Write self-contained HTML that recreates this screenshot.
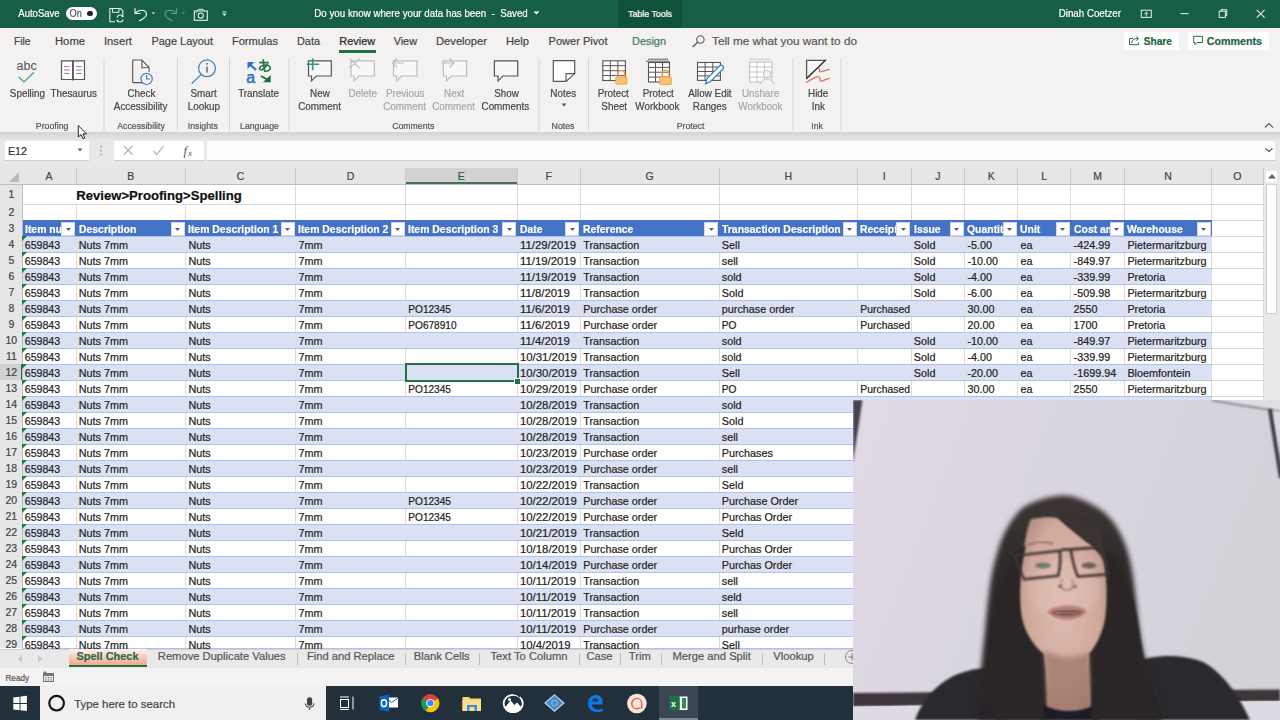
<!DOCTYPE html>
<html><head><meta charset="utf-8"><style>
html,body{margin:0;padding:0;width:1280px;height:720px;overflow:hidden;background:#fff}
body{position:relative;font-family:"Liberation Sans",sans-serif}
div,svg{position:absolute}
.t{white-space:nowrap;-webkit-text-stroke:0.2px currentColor}
</style></head><body>
<div style="left:0px;top:0px;width:1280px;height:28px;background:#175e46"></div>
<div style="left:618px;top:0px;width:64px;height:28px;background:#10513a"></div>
<div class="t" style="left:14.42px;width:49.96px;text-align:center;top:6.90px;font-size:10.60px;line-height:12.00px;color:#fff;font-weight:400;transform:scaleX(0.9)">AutoSave</div>
<div style="left:65.5px;top:6.75px;width:31px;height:13px;border-radius:7px;background:#fff"></div>
<div class="t" style="left:66.83px;width:17.34px;text-align:center;top:8.00px;font-size:10.00px;line-height:11.00px;color:#555;font-weight:400;transform:scaleX(0.92)">On</div>
<div style="left:87.2px;top:10.6px;width:5.8px;height:5.8px;border-radius:50%;background:#222"></div>
<div class="t" style="left:303.43px;width:236.14px;text-align:center;top:6.90px;font-size:10.60px;line-height:12.00px;color:#fff;font-weight:400;transform:scaleX(0.92)">Do you know where your data has been&nbsp; - &nbsp;Saved</div>
<div class="t" style="left:628.00px;top:8.50px;font-size:8.83px;line-height:10.00px;color:#fff;font-weight:400;">Table Tools</div>
<div class="t" style="left:1053.92px;width:71.75px;text-align:center;top:6.90px;font-size:10.60px;line-height:12.00px;color:#fff;font-weight:400;transform:scaleX(0.92)">Dinah Coetzer</div>
<div style="left:0px;top:28px;width:1280px;height:104px;background:#f3f2f0"></div>
<div class="t" style="left:14.00px;top:36.40px;font-size:10.24px;line-height:11.00px;color:#444;font-weight:400;">File</div>
<div class="t" style="left:55.00px;top:35.40px;font-size:11.25px;line-height:12.00px;color:#444;font-weight:400;">Home</div>
<div class="t" style="left:104.00px;top:35.40px;font-size:11.20px;line-height:12.00px;color:#444;font-weight:400;">Insert</div>
<div class="t" style="left:151.40px;top:35.40px;font-size:10.97px;line-height:12.00px;color:#444;font-weight:400;">Page Layout</div>
<div class="t" style="left:232.00px;top:35.40px;font-size:11.04px;line-height:12.00px;color:#444;font-weight:400;">Formulas</div>
<div class="t" style="left:297.00px;top:35.40px;font-size:10.89px;line-height:12.00px;color:#444;font-weight:400;">Data</div>
<div class="t" style="left:339.30px;top:35.40px;font-size:10.95px;line-height:12.00px;color:#222;font-weight:400;">Review</div>
<div class="t" style="left:393.70px;top:35.40px;font-size:10.84px;line-height:12.00px;color:#444;font-weight:400;">View</div>
<div class="t" style="left:436.00px;top:35.40px;font-size:11.19px;line-height:12.00px;color:#444;font-weight:400;">Developer</div>
<div class="t" style="left:506.00px;top:35.40px;font-size:11.18px;line-height:12.00px;color:#444;font-weight:400;">Help</div>
<div class="t" style="left:548.60px;top:35.40px;font-size:11.04px;line-height:12.00px;color:#444;font-weight:400;">Power Pivot</div>
<div class="t" style="left:632.00px;top:35.40px;font-size:10.92px;line-height:12.00px;color:#3a7a5c;font-weight:400;">Design</div>
<div style="left:338.8px;top:50.4px;width:37.2px;height:2.2px;background:#217346"></div>
<div class="t" style="left:712.00px;top:34.40px;font-size:11.75px;line-height:13.00px;color:#555;font-weight:400;">Tell me what you want to do</div>
<div style="left:1124.3px;top:31.7px;width:54.7px;height:18.2px;background:#fff;border-radius:2px"></div>
<div style="left:1187.7px;top:31.7px;width:81px;height:18.2px;background:#fff;border-radius:2px"></div>
<div class="t" style="left:1143.80px;top:36.00px;font-size:10.07px;line-height:11.00px;color:#1f5f3d;font-weight:700;">Share</div>
<div class="t" style="left:1206.80px;top:35.00px;font-size:10.68px;line-height:12.00px;color:#1f5f3d;font-weight:700;">Comments</div>
<svg style="position:absolute;left:0;top:0" width="1280" height="140" viewBox="0 0 1280 140"><line x1="104" y1="58" x2="104" y2="131" stroke="#d6d6d6" stroke-width="1"/><line x1="177.5" y1="58" x2="177.5" y2="131" stroke="#d6d6d6" stroke-width="1"/><line x1="229.5" y1="58" x2="229.5" y2="131" stroke="#d6d6d6" stroke-width="1"/><line x1="289" y1="58" x2="289" y2="131" stroke="#d6d6d6" stroke-width="1"/><line x1="539" y1="58" x2="539" y2="131" stroke="#d6d6d6" stroke-width="1"/><line x1="588.5" y1="58" x2="588.5" y2="131" stroke="#d6d6d6" stroke-width="1"/><line x1="793" y1="58" x2="793" y2="131" stroke="#d6d6d6" stroke-width="1"/><line x1="841" y1="58" x2="841" y2="131" stroke="#d6d6d6" stroke-width="1"/><text x="16.5" y="69.8" font-family="Liberation Sans" font-size="12.5" fill="#555">abc</text><polyline points="18.8,77 24,82 33.9,72.2" fill="none" stroke="#3f9a88" stroke-width="1.2"/><path d="M61.5,60.8 H72.9 V79.5 H61.5 Z M72.9,60.8 H84.5 V79.5 H72.9" fill="#fff" stroke="#555" stroke-width="1.2"/><line x1="72.9" y1="60.8" x2="72.9" y2="80.5" stroke="#555" stroke-width="1.6"/><line x1="64.1" y1="66.6" x2="69.8" y2="66.6" stroke="#e06070" stroke-width="0.9"/><line x1="64.1" y1="70" x2="69.8" y2="70" stroke="#777" stroke-width="0.9"/><line x1="64.1" y1="73.4" x2="69.8" y2="73.4" stroke="#777" stroke-width="0.9"/><line x1="76.1" y1="66.6" x2="81.7" y2="66.6" stroke="#777" stroke-width="0.9"/><line x1="76.1" y1="70" x2="81.7" y2="70" stroke="#777" stroke-width="0.9"/><line x1="76.1" y1="73.4" x2="81.7" y2="73.4" stroke="#777" stroke-width="0.9"/><path d="M132.7,60 H141.9 L149,67.5 V72 M144,82.6 H132.7 Z" fill="#fff" stroke="#555" stroke-width="1.1"/><path d="M132.7,60 V82.6" stroke="#555" stroke-width="1.1"/><path d="M141.9,60 V67.8 H149" fill="none" stroke="#555" stroke-width="1.1"/><circle cx="146.6" cy="78.9" r="5.6" fill="#f3f3f3" stroke="#3b7fc4" stroke-width="1.2"/><polyline points="146.6,75 146.6,79 150,79" fill="none" stroke="#3b7fc4" stroke-width="1.2"/><circle cx="207" cy="68.3" r="8.4" fill="none" stroke="#3b7fc4" stroke-width="1.2"/><line x1="191.7" y1="83.6" x2="201" y2="74.6" stroke="#3b7fc4" stroke-width="1.3"/><line x1="207" y1="66.5" x2="207" y2="72.5" stroke="#555" stroke-width="1.3"/><circle cx="207" cy="63.8" r="0.9" fill="#555"/><text x="246.2" y="82.5" font-family="Liberation Sans" font-size="16" font-weight="400" fill="#2b73c9" stroke="#2b73c9" stroke-width="0.5">a</text><polygon points="247.5,62 254.5,62 247.5,69" fill="#2b73c9"/><line x1="250" y1="64.5" x2="256" y2="70" stroke="#2b73c9" stroke-width="2.2"/><path d="M259.8,62.6 H268.2 M263.3,59.8 C263.4,64 263.8,68 264.8,71.2 M267.2,64.4 C265,68.5 261.5,71 259.8,69.3 C258.6,67.8 261.5,65 265.5,65 C269.5,65 271.2,67.5 269.8,69.6 C269,70.6 267.5,71.2 266,71.3" fill="none" stroke="#1f7a3b" stroke-width="1.6" stroke-linecap="round"/><polygon points="270.7,74.9 270.7,82.2 263,82.2" fill="#1a6e33"/><line x1="261" y1="76" x2="268" y2="80" stroke="#1a6e33" stroke-width="2"/><path d="M308.5,60.8 H331.3 V76 H316.3 L311.5,80.8 V76 H308.5 Z" fill="#f8f8f8" stroke="#555" stroke-width="1.2" stroke-linejoin="miter"/><path d="M312.7,58.3 V70.3 M306.7,64.3 H319.2" stroke="#2e9a80" stroke-width="1.6"/><path d="M351,60.8 H374.3 V76 H359 L354.2,80.8 V76 H351 Z" fill="#f8f8f8" stroke="#bdbdbd" stroke-width="1.2" stroke-linejoin="miter"/><path d="M349.4,58.3 L359.8,68.3 M359.8,58.3 L349.4,68.3" stroke="#bdbdbd" stroke-width="1.1"/><path d="M393.5,60.8 H416.9 V76 H401.5 L396.7,80.8 V76 H393.5 Z" fill="#f8f8f8" stroke="#bdbdbd" stroke-width="1.2" stroke-linejoin="miter"/><path d="M392.6,63 H404 M397,58.5 L392.6,63 L397,67.5" fill="none" stroke="#bdbdbd" stroke-width="1.1"/><path d="M443.3,60.8 H466.6 V76 H451.3 L446.5,80.8 V76 H443.3 Z" fill="#f8f8f8" stroke="#bdbdbd" stroke-width="1.2" stroke-linejoin="miter"/><path d="M441.8,63 H454 M449.5,58.5 L454,63 L449.5,67.5" fill="none" stroke="#bdbdbd" stroke-width="1.1"/><path d="M494.4,60.8 H517.7 V76 H502.9 L498.09999999999997,80.8 V76 H494.4 Z" fill="#f8f8f8" stroke="#555" stroke-width="1.2" stroke-linejoin="miter"/><path d="M553.3,60.6 H574.7 V73.6 L566,81.4 H553.3 Z" fill="#fff" stroke="#555" stroke-width="1.2"/><path d="M566,81.4 V73.6 H574.7" fill="none" stroke="#555" stroke-width="1.1"/><polygon points="561.5,103.5 566.5,103.5 564,106.5" fill="#555"/><rect x="602.8" y="60.8" width="22.600000000000023" height="19.700000000000003" fill="#fff" stroke="#555" stroke-width="1.1"/><line x1="610.3" y1="60.8" x2="610.3" y2="80.5" stroke="#555" stroke-width="1"/><line x1="617.9" y1="60.8" x2="617.9" y2="80.5" stroke="#555" stroke-width="1"/><line x1="602.8" y1="65.7" x2="625.4" y2="65.7" stroke="#555" stroke-width="1"/><line x1="602.8" y1="70.7" x2="625.4" y2="70.7" stroke="#555" stroke-width="1"/><line x1="602.8" y1="75.6" x2="625.4" y2="75.6" stroke="#555" stroke-width="1"/><path d="M618.2,76.9 V73.6 A3.1499999999999773,3.1499999999999773 0 0 1 624.5,73.6 V76.9" fill="none" stroke="#f0a24a" stroke-width="1.3"/><rect x="615.7" y="76.9" width="11.299999999999955" height="7.299999999999997" rx="1" fill="#f6c170" stroke="#eda04a" stroke-width="0.8"/><path d="M648.5,60 V59.2 H668 M646.5,62 V61.2 H669.5" fill="none" stroke="#555" stroke-width="0.9"/><rect x="648.5" y="62.5" width="21.0" height="19.5" fill="#fff" stroke="#555" stroke-width="1.1"/><line x1="655.5" y1="62.5" x2="655.5" y2="82" stroke="#555" stroke-width="1"/><line x1="662.5" y1="62.5" x2="662.5" y2="82" stroke="#555" stroke-width="1"/><line x1="648.5" y1="67.4" x2="669.5" y2="67.4" stroke="#555" stroke-width="1"/><line x1="648.5" y1="72.2" x2="669.5" y2="72.2" stroke="#555" stroke-width="1"/><line x1="648.5" y1="77.1" x2="669.5" y2="77.1" stroke="#555" stroke-width="1"/><path d="M662.1,77.0 V73.5 A3.3999999999999773,3.3999999999999773 0 0 1 668.9,73.5 V77.0" fill="none" stroke="#f0a24a" stroke-width="1.3"/><rect x="659.6" y="77.0" width="11.799999999999955" height="7.5" rx="1" fill="#f6c170" stroke="#eda04a" stroke-width="0.8"/><rect x="697.5" y="62.5" width="22.899999999999977" height="17.900000000000006" fill="#fff" stroke="#555" stroke-width="1.1"/><line x1="705.1" y1="62.5" x2="705.1" y2="80.4" stroke="#555" stroke-width="1"/><line x1="712.8" y1="62.5" x2="712.8" y2="80.4" stroke="#555" stroke-width="1"/><line x1="697.5" y1="67.0" x2="720.4" y2="67.0" stroke="#555" stroke-width="1"/><line x1="697.5" y1="71.5" x2="720.4" y2="71.5" stroke="#555" stroke-width="1"/><line x1="697.5" y1="75.9" x2="720.4" y2="75.9" stroke="#555" stroke-width="1"/><path d="M705.5,83.7 L707,78.5 L719.5,66 A2.3,2.3 0 0 1 722.8,69.3 L710.3,81.8 Z" fill="#fff" stroke="#3b7fc4" stroke-width="1.3"/><path d="M750,60 V59.2 H770" fill="none" stroke="#c4c4c4" stroke-width="0.9"/><rect x="749.5" y="62" width="22.5" height="20" fill="#fff" stroke="#c4c4c4" stroke-width="1.1"/><line x1="757.0" y1="62" x2="757.0" y2="82" stroke="#c4c4c4" stroke-width="1"/><line x1="764.5" y1="62" x2="764.5" y2="82" stroke="#c4c4c4" stroke-width="1"/><line x1="749.5" y1="67.0" x2="772" y2="67.0" stroke="#c4c4c4" stroke-width="1"/><line x1="749.5" y1="72.0" x2="772" y2="72.0" stroke="#c4c4c4" stroke-width="1"/><line x1="749.5" y1="77.0" x2="772" y2="77.0" stroke="#c4c4c4" stroke-width="1"/><circle cx="767" cy="74" r="3.6" fill="#f3f3f3" stroke="#c4c4c4" stroke-width="1"/><path d="M760.6,84 A6.5,6 0 0 1 773.5,84" fill="#f3f3f3" stroke="#c4c4c4" stroke-width="1"/><path d="M806.6,60.4 H825.2 L806.6,78.3 Z" fill="#fafafa" stroke="#555" stroke-width="1.3" stroke-linejoin="miter"/><line x1="825.8" y1="59.9" x2="806.4" y2="78.8" stroke="#333" stroke-width="1.1"/><path d="M818.7,67.9 C820.5,69.5 818.5,72 820.5,71.8 C823,71.5 826,70 829.2,69.3" fill="none" stroke="#d9735f" stroke-width="1.3" stroke-linecap="round"/><path d="M806.8,82.3 C810,80 815,76.5 818.5,76.6 C821,77 819,81.5 821.5,81 C824,80.5 826.5,79 829.2,78.3" fill="none" stroke="#d9735f" stroke-width="1.3" stroke-linecap="round"/><polyline points="1265,127.5 1269,123.5 1273,127.5" fill="none" stroke="#555" stroke-width="1.1"/></svg>
<div class="t" style="left:5.61px;width:42.78px;text-align:center;top:86.90px;font-size:10.90px;line-height:12.00px;color:#444;font-weight:400;transform:scaleX(0.905)">Spelling</div>
<div class="t" style="left:45.50px;width:55.49px;text-align:center;top:86.90px;font-size:10.90px;line-height:12.00px;color:#444;font-weight:400;transform:scaleX(0.905)">Thesaurus</div>
<div class="t" style="left:123.55px;width:34.89px;text-align:center;top:86.90px;font-size:10.90px;line-height:12.00px;color:#444;font-weight:400;transform:scaleX(0.905)">Check</div>
<div class="t" style="left:109.07px;width:63.36px;text-align:center;top:99.80px;font-size:10.90px;line-height:12.00px;color:#444;font-weight:400;transform:scaleX(0.905)">Accessibility</div>
<div class="t" style="left:186.72px;width:33.07px;text-align:center;top:86.90px;font-size:10.90px;line-height:12.00px;color:#444;font-weight:400;transform:scaleX(0.905)">Smart</div>
<div class="t" style="left:183.87px;width:39.76px;text-align:center;top:99.80px;font-size:10.90px;line-height:12.00px;color:#444;font-weight:400;transform:scaleX(0.905)">Lookup</div>
<div class="t" style="left:234.24px;width:49.03px;text-align:center;top:86.90px;font-size:10.90px;line-height:12.00px;color:#444;font-weight:400;transform:scaleX(0.905)">Translate</div>
<div class="t" style="left:307.10px;width:25.81px;text-align:center;top:86.90px;font-size:10.90px;line-height:12.00px;color:#444;font-weight:400;transform:scaleX(0.905)">New</div>
<div class="t" style="left:294.13px;width:51.24px;text-align:center;top:99.80px;font-size:10.90px;line-height:12.00px;color:#444;font-weight:400;transform:scaleX(0.905)">Comment</div>
<div class="t" style="left:345.25px;width:35.51px;text-align:center;top:86.90px;font-size:10.90px;line-height:12.00px;color:#a6a6a6;font-weight:400;transform:scaleX(0.905)">Delete</div>
<div class="t" style="left:381.80px;width:46.41px;text-align:center;top:86.90px;font-size:10.90px;line-height:12.00px;color:#a6a6a6;font-weight:400;transform:scaleX(0.905)">Previous</div>
<div class="t" style="left:379.38px;width:51.24px;text-align:center;top:99.80px;font-size:10.90px;line-height:12.00px;color:#a6a6a6;font-weight:400;transform:scaleX(0.905)">Comment</div>
<div class="t" style="left:441.04px;width:26.41px;text-align:center;top:86.90px;font-size:10.90px;line-height:12.00px;color:#a6a6a6;font-weight:400;transform:scaleX(0.905)">Next</div>
<div class="t" style="left:428.38px;width:51.24px;text-align:center;top:99.80px;font-size:10.90px;line-height:12.00px;color:#a6a6a6;font-weight:400;transform:scaleX(0.905)">Comment</div>
<div class="t" style="left:490.62px;width:31.27px;text-align:center;top:86.90px;font-size:10.90px;line-height:12.00px;color:#444;font-weight:400;transform:scaleX(0.905)">Show</div>
<div class="t" style="left:477.40px;width:56.69px;text-align:center;top:99.80px;font-size:10.90px;line-height:12.00px;color:#444;font-weight:400;transform:scaleX(0.905)">Comments</div>
<div class="t" style="left:547.01px;width:32.47px;text-align:center;top:86.90px;font-size:10.90px;line-height:12.00px;color:#444;font-weight:400;transform:scaleX(0.905)">Notes</div>
<div class="t" style="left:594.49px;width:38.53px;text-align:center;top:86.90px;font-size:10.90px;line-height:12.00px;color:#444;font-weight:400;transform:scaleX(0.905)">Protect</div>
<div class="t" style="left:597.51px;width:32.48px;text-align:center;top:99.80px;font-size:10.90px;line-height:12.00px;color:#444;font-weight:400;transform:scaleX(0.905)">Sheet</div>
<div class="t" style="left:638.99px;width:38.53px;text-align:center;top:86.90px;font-size:10.90px;line-height:12.00px;color:#444;font-weight:400;transform:scaleX(0.905)">Protect</div>
<div class="t" style="left:631.07px;width:52.87px;text-align:center;top:99.80px;font-size:10.90px;line-height:12.00px;color:#444;font-weight:400;transform:scaleX(0.905)">Workbook</div>
<div class="t" style="left:683.57px;width:51.86px;text-align:center;top:86.90px;font-size:10.90px;line-height:12.00px;color:#444;font-weight:400;transform:scaleX(0.905)">Allow Edit</div>
<div class="t" style="left:689.22px;width:41.57px;text-align:center;top:99.80px;font-size:10.90px;line-height:12.00px;color:#444;font-weight:400;transform:scaleX(0.905)">Ranges</div>
<div class="t" style="left:738.40px;width:45.20px;text-align:center;top:86.90px;font-size:10.90px;line-height:12.00px;color:#a6a6a6;font-weight:400;transform:scaleX(0.905)">Unshare</div>
<div class="t" style="left:734.32px;width:52.87px;text-align:center;top:99.80px;font-size:10.90px;line-height:12.00px;color:#a6a6a6;font-weight:400;transform:scaleX(0.905)">Workbook</div>
<div class="t" style="left:804.79px;width:26.42px;text-align:center;top:86.90px;font-size:10.90px;line-height:12.00px;color:#444;font-weight:400;transform:scaleX(0.905)">Hide</div>
<div class="t" style="left:808.98px;width:18.54px;text-align:center;top:99.80px;font-size:10.90px;line-height:12.00px;color:#444;font-weight:400;transform:scaleX(0.905)">Ink</div>
<div class="t" style="left:32.62px;width:38.26px;text-align:center;top:120.50px;font-size:9.20px;line-height:10.00px;color:#555;font-weight:400;transform:scaleX(0.95)">Proofing</div>
<div class="t" style="left:113.95px;width:54.10px;text-align:center;top:120.50px;font-size:9.20px;line-height:10.00px;color:#555;font-weight:400;transform:scaleX(0.95)">Accessibility</div>
<div class="t" style="left:185.15px;width:35.70px;text-align:center;top:120.50px;font-size:9.20px;line-height:10.00px;color:#555;font-weight:400;transform:scaleX(0.95)">Insights</div>
<div class="t" style="left:236.54px;width:44.93px;text-align:center;top:120.50px;font-size:9.20px;line-height:10.00px;color:#555;font-weight:400;transform:scaleX(0.95)">Language</div>
<div class="t" style="left:389.01px;width:48.47px;text-align:center;top:120.50px;font-size:9.20px;line-height:10.00px;color:#555;font-weight:400;transform:scaleX(0.95)">Comments</div>
<div class="t" style="left:549.48px;width:28.03px;text-align:center;top:120.50px;font-size:9.20px;line-height:10.00px;color:#555;font-weight:400;transform:scaleX(0.95)">Notes</div>
<div class="t" style="left:673.68px;width:33.14px;text-align:center;top:120.50px;font-size:9.20px;line-height:10.00px;color:#555;font-weight:400;transform:scaleX(0.95)">Protect</div>
<div class="t" style="left:809.36px;width:16.27px;text-align:center;top:120.50px;font-size:9.20px;line-height:10.00px;color:#555;font-weight:400;transform:scaleX(0.95)">Ink</div>
<div style="left:0px;top:132px;width:1280px;height:36px;background:#e8e8e8"></div>
<div style="left:0;top:132px;width:1280px;height:8px;background:linear-gradient(#d3d3d3,#e6e6e6)"></div>
<div style="left:4.5px;top:140.5px;width:84px;height:20px;background:#fff;border-bottom:1px solid #cdcdcd;box-sizing:border-box"></div>
<div class="t" style="left:8.00px;top:144.50px;font-size:10.68px;line-height:12.00px;color:#333;font-weight:400;">E12</div>
<div style="left:113.9px;top:140.5px;width:90px;height:20px;background:#fff;border-bottom:1px solid #cdcdcd;box-sizing:border-box"></div>
<div style="left:207.2px;top:140.5px;width:1068px;height:20px;background:#fdfdfd;border-bottom:1px solid #cdcdcd;box-sizing:border-box"></div>
<div style="left:0px;top:168px;width:1264px;height:16px;background:#e6e6e6"></div>
<div style="left:405.5px;top:168px;width:111.60000000000002px;height:16px;background:#d2d2d2"></div>
<div class="t" style="left:43.50px;width:11.00px;text-align:center;top:170.00px;font-size:10.50px;line-height:12.00px;color:#444;font-weight:400;">A</div>
<div class="t" style="left:125.30px;width:11.00px;text-align:center;top:170.00px;font-size:10.50px;line-height:12.00px;color:#444;font-weight:400;">B</div>
<div class="t" style="left:234.86px;width:11.58px;text-align:center;top:170.00px;font-size:10.50px;line-height:12.00px;color:#444;font-weight:400;">C</div>
<div class="t" style="left:344.81px;width:11.58px;text-align:center;top:170.00px;font-size:10.50px;line-height:12.00px;color:#444;font-weight:400;">D</div>
<div class="t" style="left:455.80px;width:11.00px;text-align:center;top:170.00px;font-size:10.50px;line-height:12.00px;color:#1f5a3a;font-weight:400;">E</div>
<div class="t" style="left:543.54px;width:10.41px;text-align:center;top:170.00px;font-size:10.50px;line-height:12.00px;color:#444;font-weight:400;">F</div>
<div class="t" style="left:643.62px;width:12.17px;text-align:center;top:170.00px;font-size:10.50px;line-height:12.00px;color:#444;font-weight:400;">G</div>
<div class="t" style="left:782.46px;width:11.58px;text-align:center;top:170.00px;font-size:10.50px;line-height:12.00px;color:#444;font-weight:400;">H</div>
<div class="t" style="left:880.79px;width:6.92px;text-align:center;top:170.00px;font-size:10.50px;line-height:12.00px;color:#444;font-weight:400;">I</div>
<div class="t" style="left:933.23px;width:9.25px;text-align:center;top:170.00px;font-size:10.50px;line-height:12.00px;color:#444;font-weight:400;">J</div>
<div class="t" style="left:985.70px;width:11.00px;text-align:center;top:170.00px;font-size:10.50px;line-height:12.00px;color:#444;font-weight:400;">K</div>
<div class="t" style="left:1039.33px;width:9.84px;text-align:center;top:170.00px;font-size:10.50px;line-height:12.00px;color:#444;font-weight:400;">L</div>
<div class="t" style="left:1091.33px;width:12.75px;text-align:center;top:170.00px;font-size:10.50px;line-height:12.00px;color:#444;font-weight:400;">M</div>
<div class="t" style="left:1162.26px;width:11.58px;text-align:center;top:170.00px;font-size:10.50px;line-height:12.00px;color:#444;font-weight:400;">N</div>
<div class="t" style="left:1231.37px;width:12.17px;text-align:center;top:170.00px;font-size:10.50px;line-height:12.00px;color:#444;font-weight:400;">O</div>
<svg style="position:absolute;left:0;top:168px" width="22" height="16"><polygon points="19,4 19,14 9,14" fill="#b9b9b9"/></svg>
<div style="left:22px;top:184px;width:1241.4px;height:464px;background:#fff"></div>
<div style="left:0px;top:184px;width:22px;height:464px;background:#e6e6e6"></div>
<div id="grid" style="left:0;top:0;width:1280px;height:720px;overflow:hidden">
<div style="left:75.5px;top:184px;width:1px;height:464px;background:#dadada"></div>
<div style="left:185.1px;top:184px;width:1px;height:464px;background:#dadada"></div>
<div style="left:295.2px;top:184px;width:1px;height:464px;background:#dadada"></div>
<div style="left:405.0px;top:184px;width:1px;height:464px;background:#dadada"></div>
<div style="left:516.6px;top:184px;width:1px;height:464px;background:#dadada"></div>
<div style="left:579.9px;top:184px;width:1px;height:464px;background:#dadada"></div>
<div style="left:718.5px;top:184px;width:1px;height:464px;background:#dadada"></div>
<div style="left:857.0px;top:184px;width:1px;height:464px;background:#dadada"></div>
<div style="left:910.5px;top:184px;width:1px;height:464px;background:#dadada"></div>
<div style="left:964.2px;top:184px;width:1px;height:464px;background:#dadada"></div>
<div style="left:1017.2px;top:184px;width:1px;height:464px;background:#dadada"></div>
<div style="left:1070.3px;top:184px;width:1px;height:464px;background:#dadada"></div>
<div style="left:1124.1px;top:184px;width:1px;height:464px;background:#dadada"></div>
<div style="left:1211.0px;top:184px;width:1px;height:464px;background:#dadada"></div>
<div style="left:1262.9px;top:184px;width:1px;height:464px;background:#dadada"></div>
<div style="left:22px;top:203.5px;width:1241.4px;height:1px;background:#dadada"></div>
<div style="left:22px;top:219.5px;width:1241.4px;height:1px;background:#dadada"></div>
<div style="left:22px;top:235.5px;width:1241.4px;height:1px;background:#dadada"></div>
<div style="left:22px;top:251.5px;width:1241.4px;height:1px;background:#dadada"></div>
<div style="left:22px;top:267.5px;width:1241.4px;height:1px;background:#dadada"></div>
<div style="left:22px;top:283.5px;width:1241.4px;height:1px;background:#dadada"></div>
<div style="left:22px;top:299.5px;width:1241.4px;height:1px;background:#dadada"></div>
<div style="left:22px;top:315.5px;width:1241.4px;height:1px;background:#dadada"></div>
<div style="left:22px;top:331.5px;width:1241.4px;height:1px;background:#dadada"></div>
<div style="left:22px;top:347.5px;width:1241.4px;height:1px;background:#dadada"></div>
<div style="left:22px;top:363.5px;width:1241.4px;height:1px;background:#dadada"></div>
<div style="left:22px;top:379.5px;width:1241.4px;height:1px;background:#dadada"></div>
<div style="left:22px;top:395.5px;width:1241.4px;height:1px;background:#dadada"></div>
<div style="left:22px;top:411.5px;width:1241.4px;height:1px;background:#dadada"></div>
<div style="left:22px;top:427.5px;width:1241.4px;height:1px;background:#dadada"></div>
<div style="left:22px;top:443.5px;width:1241.4px;height:1px;background:#dadada"></div>
<div style="left:22px;top:459.5px;width:1241.4px;height:1px;background:#dadada"></div>
<div style="left:22px;top:475.5px;width:1241.4px;height:1px;background:#dadada"></div>
<div style="left:22px;top:491.5px;width:1241.4px;height:1px;background:#dadada"></div>
<div style="left:22px;top:507.5px;width:1241.4px;height:1px;background:#dadada"></div>
<div style="left:22px;top:523.5px;width:1241.4px;height:1px;background:#dadada"></div>
<div style="left:22px;top:539.5px;width:1241.4px;height:1px;background:#dadada"></div>
<div style="left:22px;top:555.5px;width:1241.4px;height:1px;background:#dadada"></div>
<div style="left:22px;top:571.5px;width:1241.4px;height:1px;background:#dadada"></div>
<div style="left:22px;top:587.5px;width:1241.4px;height:1px;background:#dadada"></div>
<div style="left:22px;top:603.5px;width:1241.4px;height:1px;background:#dadada"></div>
<div style="left:22px;top:619.5px;width:1241.4px;height:1px;background:#dadada"></div>
<div style="left:22px;top:635.5px;width:1241.4px;height:1px;background:#dadada"></div>
<div style="left:22px;top:651.5px;width:1241.4px;height:1px;background:#dadada"></div>
<div style="left:75px;top:184.5px;width:2px;height:19px;background:#fff"></div>
<div style="left:184.6px;top:184.5px;width:2px;height:19px;background:#fff"></div>
<div style="left:22px;top:220px;width:1189.5px;height:16px;background:#4472c4"></div>
<div style="left:22px;top:236px;width:1189.5px;height:16px;background:#d9e1f2"></div>
<div style="left:22px;top:235.5px;width:1189.5px;height:1px;background:#b2c2e4"></div>
<div style="left:22px;top:251.5px;width:1189.5px;height:1px;background:#b2c2e4"></div>
<div style="left:22px;top:268px;width:1189.5px;height:16px;background:#d9e1f2"></div>
<div style="left:22px;top:267.5px;width:1189.5px;height:1px;background:#b2c2e4"></div>
<div style="left:22px;top:283.5px;width:1189.5px;height:1px;background:#b2c2e4"></div>
<div style="left:22px;top:300px;width:1189.5px;height:16px;background:#d9e1f2"></div>
<div style="left:22px;top:299.5px;width:1189.5px;height:1px;background:#b2c2e4"></div>
<div style="left:22px;top:315.5px;width:1189.5px;height:1px;background:#b2c2e4"></div>
<div style="left:22px;top:332px;width:1189.5px;height:16px;background:#d9e1f2"></div>
<div style="left:22px;top:331.5px;width:1189.5px;height:1px;background:#b2c2e4"></div>
<div style="left:22px;top:347.5px;width:1189.5px;height:1px;background:#b2c2e4"></div>
<div style="left:22px;top:364px;width:1189.5px;height:16px;background:#d9e1f2"></div>
<div style="left:22px;top:363.5px;width:1189.5px;height:1px;background:#b2c2e4"></div>
<div style="left:22px;top:379.5px;width:1189.5px;height:1px;background:#b2c2e4"></div>
<div style="left:22px;top:396px;width:1189.5px;height:16px;background:#d9e1f2"></div>
<div style="left:22px;top:395.5px;width:1189.5px;height:1px;background:#b2c2e4"></div>
<div style="left:22px;top:411.5px;width:1189.5px;height:1px;background:#b2c2e4"></div>
<div style="left:22px;top:428px;width:1189.5px;height:16px;background:#d9e1f2"></div>
<div style="left:22px;top:427.5px;width:1189.5px;height:1px;background:#b2c2e4"></div>
<div style="left:22px;top:443.5px;width:1189.5px;height:1px;background:#b2c2e4"></div>
<div style="left:22px;top:460px;width:1189.5px;height:16px;background:#d9e1f2"></div>
<div style="left:22px;top:459.5px;width:1189.5px;height:1px;background:#b2c2e4"></div>
<div style="left:22px;top:475.5px;width:1189.5px;height:1px;background:#b2c2e4"></div>
<div style="left:22px;top:492px;width:1189.5px;height:16px;background:#d9e1f2"></div>
<div style="left:22px;top:491.5px;width:1189.5px;height:1px;background:#b2c2e4"></div>
<div style="left:22px;top:507.5px;width:1189.5px;height:1px;background:#b2c2e4"></div>
<div style="left:22px;top:524px;width:1189.5px;height:16px;background:#d9e1f2"></div>
<div style="left:22px;top:523.5px;width:1189.5px;height:1px;background:#b2c2e4"></div>
<div style="left:22px;top:539.5px;width:1189.5px;height:1px;background:#b2c2e4"></div>
<div style="left:22px;top:556px;width:1189.5px;height:16px;background:#d9e1f2"></div>
<div style="left:22px;top:555.5px;width:1189.5px;height:1px;background:#b2c2e4"></div>
<div style="left:22px;top:571.5px;width:1189.5px;height:1px;background:#b2c2e4"></div>
<div style="left:22px;top:588px;width:1189.5px;height:16px;background:#d9e1f2"></div>
<div style="left:22px;top:587.5px;width:1189.5px;height:1px;background:#b2c2e4"></div>
<div style="left:22px;top:603.5px;width:1189.5px;height:1px;background:#b2c2e4"></div>
<div style="left:22px;top:620px;width:1189.5px;height:16px;background:#d9e1f2"></div>
<div style="left:22px;top:619.5px;width:1189.5px;height:1px;background:#b2c2e4"></div>
<div style="left:22px;top:635.5px;width:1189.5px;height:1px;background:#b2c2e4"></div>
<div style="left:22px;top:647.5px;width:1189.5px;height:1px;background:#b2c2e4"></div>
</div>
<div style="left:22px;top:220px;width:53px;height:16px;overflow:hidden">
<div class="t" style="left:2.8px;top:2.93px;font-size:10.8px;line-height:12.06px;color:#fff;font-weight:700;transform:scaleX(0.965);transform-origin:0 0">Item number</div>
</div>
<div style="left:61.0px;top:222px;width:14px;height:13.5px;background:#fff;box-sizing:border-box;border:1px solid #d8d8d8"></div>
<svg style="position:absolute;left:65.5px;top:228px" width="6" height="4"><polygon points="0,0 5,0 2.5,3" fill="#606060"/></svg>
<div style="left:76px;top:220px;width:108.6px;height:16px;overflow:hidden">
<div class="t" style="left:2.8px;top:2.93px;font-size:10.8px;line-height:12.06px;color:#fff;font-weight:700;transform:scaleX(0.965);transform-origin:0 0">Description</div>
</div>
<div style="left:170.6px;top:222px;width:14px;height:13.5px;background:#fff;box-sizing:border-box;border:1px solid #d8d8d8"></div>
<svg style="position:absolute;left:175.1px;top:228px" width="6" height="4"><polygon points="0,0 5,0 2.5,3" fill="#606060"/></svg>
<div style="left:185.6px;top:220px;width:109.1px;height:16px;overflow:hidden">
<div class="t" style="left:2.8px;top:2.93px;font-size:10.8px;line-height:12.06px;color:#fff;font-weight:700;transform:scaleX(0.965);transform-origin:0 0">Item Description 1</div>
</div>
<div style="left:280.7px;top:222px;width:14px;height:13.5px;background:#fff;box-sizing:border-box;border:1px solid #d8d8d8"></div>
<svg style="position:absolute;left:285.2px;top:228px" width="6" height="4"><polygon points="0,0 5,0 2.5,3" fill="#606060"/></svg>
<div style="left:295.7px;top:220px;width:108.80000000000001px;height:16px;overflow:hidden">
<div class="t" style="left:2.8px;top:2.93px;font-size:10.8px;line-height:12.06px;color:#fff;font-weight:700;transform:scaleX(0.965);transform-origin:0 0">Item Description 2</div>
</div>
<div style="left:390.5px;top:222px;width:14px;height:13.5px;background:#fff;box-sizing:border-box;border:1px solid #d8d8d8"></div>
<svg style="position:absolute;left:395.0px;top:228px" width="6" height="4"><polygon points="0,0 5,0 2.5,3" fill="#606060"/></svg>
<div style="left:405.5px;top:220px;width:110.60000000000002px;height:16px;overflow:hidden">
<div class="t" style="left:2.8px;top:2.93px;font-size:10.8px;line-height:12.06px;color:#fff;font-weight:700;transform:scaleX(0.965);transform-origin:0 0">Item Description 3</div>
</div>
<div style="left:502.1px;top:222px;width:14px;height:13.5px;background:#fff;box-sizing:border-box;border:1px solid #d8d8d8"></div>
<svg style="position:absolute;left:506.6px;top:228px" width="6" height="4"><polygon points="0,0 5,0 2.5,3" fill="#606060"/></svg>
<div style="left:517.1px;top:220px;width:62.299999999999955px;height:16px;overflow:hidden">
<div class="t" style="left:2.8px;top:2.93px;font-size:10.8px;line-height:12.06px;color:#fff;font-weight:700;transform:scaleX(0.965);transform-origin:0 0">Date</div>
</div>
<div style="left:565.4px;top:222px;width:14px;height:13.5px;background:#fff;box-sizing:border-box;border:1px solid #d8d8d8"></div>
<svg style="position:absolute;left:569.9px;top:228px" width="6" height="4"><polygon points="0,0 5,0 2.5,3" fill="#606060"/></svg>
<div style="left:580.4px;top:220px;width:137.60000000000002px;height:16px;overflow:hidden">
<div class="t" style="left:2.8px;top:2.93px;font-size:10.8px;line-height:12.06px;color:#fff;font-weight:700;transform:scaleX(0.965);transform-origin:0 0">Reference</div>
</div>
<div style="left:704.0px;top:222px;width:14px;height:13.5px;background:#fff;box-sizing:border-box;border:1px solid #d8d8d8"></div>
<svg style="position:absolute;left:708.5px;top:228px" width="6" height="4"><polygon points="0,0 5,0 2.5,3" fill="#606060"/></svg>
<div style="left:719px;top:220px;width:137.5px;height:16px;overflow:hidden">
<div class="t" style="left:2.8px;top:2.93px;font-size:10.8px;line-height:12.06px;color:#fff;font-weight:700;transform:scaleX(0.965);transform-origin:0 0">Transaction Description</div>
</div>
<div style="left:842.5px;top:222px;width:14px;height:13.5px;background:#fff;box-sizing:border-box;border:1px solid #d8d8d8"></div>
<svg style="position:absolute;left:847.0px;top:228px" width="6" height="4"><polygon points="0,0 5,0 2.5,3" fill="#606060"/></svg>
<div style="left:857.5px;top:220px;width:52.5px;height:16px;overflow:hidden">
<div class="t" style="left:2.8px;top:2.93px;font-size:10.8px;line-height:12.06px;color:#fff;font-weight:700;transform:scaleX(0.965);transform-origin:0 0">Receipt</div>
</div>
<div style="left:896.0px;top:222px;width:14px;height:13.5px;background:#fff;box-sizing:border-box;border:1px solid #d8d8d8"></div>
<svg style="position:absolute;left:900.5px;top:228px" width="6" height="4"><polygon points="0,0 5,0 2.5,3" fill="#606060"/></svg>
<div style="left:911px;top:220px;width:52.700000000000045px;height:16px;overflow:hidden">
<div class="t" style="left:2.8px;top:2.93px;font-size:10.8px;line-height:12.06px;color:#fff;font-weight:700;transform:scaleX(0.965);transform-origin:0 0">Issue</div>
</div>
<div style="left:949.7px;top:222px;width:14px;height:13.5px;background:#fff;box-sizing:border-box;border:1px solid #d8d8d8"></div>
<svg style="position:absolute;left:954.2px;top:228px" width="6" height="4"><polygon points="0,0 5,0 2.5,3" fill="#606060"/></svg>
<div style="left:964.7px;top:220px;width:52.0px;height:16px;overflow:hidden">
<div class="t" style="left:2.8px;top:2.93px;font-size:10.8px;line-height:12.06px;color:#fff;font-weight:700;transform:scaleX(0.965);transform-origin:0 0">Quantity</div>
</div>
<div style="left:1002.7px;top:222px;width:14px;height:13.5px;background:#fff;box-sizing:border-box;border:1px solid #d8d8d8"></div>
<svg style="position:absolute;left:1007.2px;top:228px" width="6" height="4"><polygon points="0,0 5,0 2.5,3" fill="#606060"/></svg>
<div style="left:1017.7px;top:220px;width:52.09999999999991px;height:16px;overflow:hidden">
<div class="t" style="left:2.8px;top:2.93px;font-size:10.8px;line-height:12.06px;color:#fff;font-weight:700;transform:scaleX(0.965);transform-origin:0 0">Unit</div>
</div>
<div style="left:1055.8px;top:222px;width:14px;height:13.5px;background:#fff;box-sizing:border-box;border:1px solid #d8d8d8"></div>
<svg style="position:absolute;left:1060.3px;top:228px" width="6" height="4"><polygon points="0,0 5,0 2.5,3" fill="#606060"/></svg>
<div style="left:1070.8px;top:220px;width:52.799999999999955px;height:16px;overflow:hidden">
<div class="t" style="left:2.8px;top:2.93px;font-size:10.8px;line-height:12.06px;color:#fff;font-weight:700;transform:scaleX(0.965);transform-origin:0 0">Cost amount</div>
</div>
<div style="left:1109.6px;top:222px;width:14px;height:13.5px;background:#fff;box-sizing:border-box;border:1px solid #d8d8d8"></div>
<svg style="position:absolute;left:1114.1px;top:228px" width="6" height="4"><polygon points="0,0 5,0 2.5,3" fill="#606060"/></svg>
<div style="left:1124.6px;top:220px;width:85.90000000000009px;height:16px;overflow:hidden">
<div class="t" style="left:2.8px;top:2.93px;font-size:10.8px;line-height:12.06px;color:#fff;font-weight:700;transform:scaleX(0.965);transform-origin:0 0">Warehouse</div>
</div>
<div style="left:1196.5px;top:222px;width:14px;height:13.5px;background:#fff;box-sizing:border-box;border:1px solid #d8d8d8"></div>
<svg style="position:absolute;left:1201.0px;top:228px" width="6" height="4"><polygon points="0,0 5,0 2.5,3" fill="#606060"/></svg>
<div class="t" style="left:76.20px;top:187.60px;font-size:13.14px;line-height:15.00px;color:#111;font-weight:700;">Review&gt;Proofing&gt;Spelling</div>
<div style="left:0px;top:364px;width:22px;height:16px;background:#d2d2d2"></div>
<div class="t" style="left:6.48px;width:9.84px;text-align:center;top:188.00px;font-size:10.50px;line-height:12.00px;color:#444;font-weight:400;">1</div>
<div class="t" style="left:6.48px;width:9.84px;text-align:center;top:206.00px;font-size:10.50px;line-height:12.00px;color:#444;font-weight:400;">2</div>
<div class="t" style="left:6.48px;width:9.84px;text-align:center;top:222.00px;font-size:10.50px;line-height:12.00px;color:#444;font-weight:400;">3</div>
<div class="t" style="left:6.48px;width:9.84px;text-align:center;top:238.00px;font-size:10.50px;line-height:12.00px;color:#444;font-weight:400;">4</div>
<div class="t" style="left:6.48px;width:9.84px;text-align:center;top:254.00px;font-size:10.50px;line-height:12.00px;color:#444;font-weight:400;">5</div>
<div class="t" style="left:6.48px;width:9.84px;text-align:center;top:270.00px;font-size:10.50px;line-height:12.00px;color:#444;font-weight:400;">6</div>
<div class="t" style="left:6.48px;width:9.84px;text-align:center;top:286.00px;font-size:10.50px;line-height:12.00px;color:#444;font-weight:400;">7</div>
<div class="t" style="left:6.48px;width:9.84px;text-align:center;top:302.00px;font-size:10.50px;line-height:12.00px;color:#444;font-weight:400;">8</div>
<div class="t" style="left:6.48px;width:9.84px;text-align:center;top:318.00px;font-size:10.50px;line-height:12.00px;color:#444;font-weight:400;">9</div>
<div class="t" style="left:3.56px;width:15.68px;text-align:center;top:334.00px;font-size:10.50px;line-height:12.00px;color:#444;font-weight:400;">10</div>
<div class="t" style="left:3.95px;width:14.90px;text-align:center;top:350.00px;font-size:10.50px;line-height:12.00px;color:#444;font-weight:400;">11</div>
<div class="t" style="left:3.56px;width:15.68px;text-align:center;top:366.00px;font-size:10.50px;line-height:12.00px;color:#444;font-weight:400;">12</div>
<div class="t" style="left:3.56px;width:15.68px;text-align:center;top:382.00px;font-size:10.50px;line-height:12.00px;color:#444;font-weight:400;">13</div>
<div class="t" style="left:3.56px;width:15.68px;text-align:center;top:398.00px;font-size:10.50px;line-height:12.00px;color:#444;font-weight:400;">14</div>
<div class="t" style="left:3.56px;width:15.68px;text-align:center;top:414.00px;font-size:10.50px;line-height:12.00px;color:#444;font-weight:400;">15</div>
<div class="t" style="left:3.56px;width:15.68px;text-align:center;top:430.00px;font-size:10.50px;line-height:12.00px;color:#444;font-weight:400;">16</div>
<div class="t" style="left:3.56px;width:15.68px;text-align:center;top:446.00px;font-size:10.50px;line-height:12.00px;color:#444;font-weight:400;">17</div>
<div class="t" style="left:3.56px;width:15.68px;text-align:center;top:462.00px;font-size:10.50px;line-height:12.00px;color:#444;font-weight:400;">18</div>
<div class="t" style="left:3.56px;width:15.68px;text-align:center;top:478.00px;font-size:10.50px;line-height:12.00px;color:#444;font-weight:400;">19</div>
<div class="t" style="left:3.56px;width:15.68px;text-align:center;top:494.00px;font-size:10.50px;line-height:12.00px;color:#444;font-weight:400;">20</div>
<div class="t" style="left:3.56px;width:15.68px;text-align:center;top:510.00px;font-size:10.50px;line-height:12.00px;color:#444;font-weight:400;">21</div>
<div class="t" style="left:3.56px;width:15.68px;text-align:center;top:526.00px;font-size:10.50px;line-height:12.00px;color:#444;font-weight:400;">22</div>
<div class="t" style="left:3.56px;width:15.68px;text-align:center;top:542.00px;font-size:10.50px;line-height:12.00px;color:#444;font-weight:400;">23</div>
<div class="t" style="left:3.56px;width:15.68px;text-align:center;top:558.00px;font-size:10.50px;line-height:12.00px;color:#444;font-weight:400;">24</div>
<div class="t" style="left:3.56px;width:15.68px;text-align:center;top:574.00px;font-size:10.50px;line-height:12.00px;color:#444;font-weight:400;">25</div>
<div class="t" style="left:3.56px;width:15.68px;text-align:center;top:590.00px;font-size:10.50px;line-height:12.00px;color:#444;font-weight:400;">26</div>
<div class="t" style="left:3.56px;width:15.68px;text-align:center;top:606.00px;font-size:10.50px;line-height:12.00px;color:#444;font-weight:400;">27</div>
<div class="t" style="left:3.56px;width:15.68px;text-align:center;top:622.00px;font-size:10.50px;line-height:12.00px;color:#444;font-weight:400;">28</div>
<div class="t" style="left:3.56px;width:15.68px;text-align:center;top:638.00px;font-size:10.50px;line-height:12.00px;color:#444;font-weight:400;">29</div>
<div style="left:20.5px;top:364px;width:1.8px;height:16px;background:#217346"></div>
<div style="left:0px;top:183.5px;width:1264px;height:1px;background:#bdbdbd"></div>
<div style="left:21.5px;top:184px;width:1px;height:464px;background:#bdbdbd"></div>
<div style="left:405.5px;top:182px;width:111.60000000000002px;height:2px;background:#3f7358"></div>
<div style="left:75.5px;top:168px;width:1px;height:16px;background:#c8c8c8"></div>
<div style="left:185.1px;top:168px;width:1px;height:16px;background:#c8c8c8"></div>
<div style="left:295.2px;top:168px;width:1px;height:16px;background:#c8c8c8"></div>
<div style="left:405.0px;top:168px;width:1px;height:16px;background:#c8c8c8"></div>
<div style="left:516.6px;top:168px;width:1px;height:16px;background:#c8c8c8"></div>
<div style="left:579.9px;top:168px;width:1px;height:16px;background:#c8c8c8"></div>
<div style="left:718.5px;top:168px;width:1px;height:16px;background:#c8c8c8"></div>
<div style="left:857.0px;top:168px;width:1px;height:16px;background:#c8c8c8"></div>
<div style="left:910.5px;top:168px;width:1px;height:16px;background:#c8c8c8"></div>
<div style="left:964.2px;top:168px;width:1px;height:16px;background:#c8c8c8"></div>
<div style="left:1017.2px;top:168px;width:1px;height:16px;background:#c8c8c8"></div>
<div style="left:1070.3px;top:168px;width:1px;height:16px;background:#c8c8c8"></div>
<div style="left:1124.1px;top:168px;width:1px;height:16px;background:#c8c8c8"></div>
<div style="left:1211.0px;top:168px;width:1px;height:16px;background:#c8c8c8"></div>
<div style="left:1262.9px;top:168px;width:1px;height:16px;background:#c8c8c8"></div>
<div class="t" style="left:24.80px;top:239.00px;font-size:10.60px;line-height:12.00px;color:#222;font-weight:400;">659843</div>
<div class="t" style="left:78.80px;top:239.00px;font-size:10.80px;line-height:12.00px;color:#222;font-weight:400;">Nuts 7mm</div>
<div class="t" style="left:188.40px;top:239.00px;font-size:10.80px;line-height:12.00px;color:#222;font-weight:400;">Nuts</div>
<div class="t" style="left:298.50px;top:239.00px;font-size:10.80px;line-height:12.00px;color:#222;font-weight:400;">7mm</div>
<div class="t" style="left:519.90px;top:239.00px;font-size:11.40px;line-height:12.00px;color:#222;font-weight:400;">11/29/2019</div>
<div class="t" style="left:583.20px;top:239.00px;font-size:10.80px;line-height:12.00px;color:#222;font-weight:400;">Transaction</div>
<div class="t" style="left:721.80px;top:239.00px;font-size:10.80px;line-height:12.00px;color:#222;font-weight:400;">Sell</div>
<div class="t" style="left:913.80px;top:239.00px;font-size:10.80px;line-height:12.00px;color:#222;font-weight:400;">Sold</div>
<div class="t" style="left:967.50px;top:239.00px;font-size:10.80px;line-height:12.00px;color:#222;font-weight:400;">-5.00</div>
<div class="t" style="left:1020.50px;top:239.00px;font-size:10.80px;line-height:12.00px;color:#222;font-weight:400;">ea</div>
<div class="t" style="left:1073.60px;top:239.00px;font-size:10.80px;line-height:12.00px;color:#222;font-weight:400;">-424.99</div>
<div class="t" style="left:1127.40px;top:239.00px;font-size:10.80px;line-height:12.00px;color:#222;font-weight:400;">Pietermaritzburg</div>
<svg style="position:absolute;left:22px;top:236px" width="5" height="5"><polygon points="0,0 5,0 0,5" fill="#1a7a3a"/></svg>
<div class="t" style="left:24.80px;top:255.00px;font-size:10.60px;line-height:12.00px;color:#222;font-weight:400;">659843</div>
<div class="t" style="left:78.80px;top:255.00px;font-size:10.80px;line-height:12.00px;color:#222;font-weight:400;">Nuts 7mm</div>
<div class="t" style="left:188.40px;top:255.00px;font-size:10.80px;line-height:12.00px;color:#222;font-weight:400;">Nuts</div>
<div class="t" style="left:298.50px;top:255.00px;font-size:10.80px;line-height:12.00px;color:#222;font-weight:400;">7mm</div>
<div class="t" style="left:519.90px;top:255.00px;font-size:11.40px;line-height:12.00px;color:#222;font-weight:400;">11/19/2019</div>
<div class="t" style="left:583.20px;top:255.00px;font-size:10.80px;line-height:12.00px;color:#222;font-weight:400;">Transaction</div>
<div class="t" style="left:721.80px;top:255.00px;font-size:10.80px;line-height:12.00px;color:#222;font-weight:400;">sell</div>
<div class="t" style="left:913.80px;top:255.00px;font-size:10.80px;line-height:12.00px;color:#222;font-weight:400;">Sold</div>
<div class="t" style="left:967.50px;top:255.00px;font-size:10.80px;line-height:12.00px;color:#222;font-weight:400;">-10.00</div>
<div class="t" style="left:1020.50px;top:255.00px;font-size:10.80px;line-height:12.00px;color:#222;font-weight:400;">ea</div>
<div class="t" style="left:1073.60px;top:255.00px;font-size:10.80px;line-height:12.00px;color:#222;font-weight:400;">-849.97</div>
<div class="t" style="left:1127.40px;top:255.00px;font-size:10.80px;line-height:12.00px;color:#222;font-weight:400;">Pietermaritzburg</div>
<svg style="position:absolute;left:22px;top:252px" width="5" height="5"><polygon points="0,0 5,0 0,5" fill="#1a7a3a"/></svg>
<div class="t" style="left:24.80px;top:271.00px;font-size:10.60px;line-height:12.00px;color:#222;font-weight:400;">659843</div>
<div class="t" style="left:78.80px;top:271.00px;font-size:10.80px;line-height:12.00px;color:#222;font-weight:400;">Nuts 7mm</div>
<div class="t" style="left:188.40px;top:271.00px;font-size:10.80px;line-height:12.00px;color:#222;font-weight:400;">Nuts</div>
<div class="t" style="left:298.50px;top:271.00px;font-size:10.80px;line-height:12.00px;color:#222;font-weight:400;">7mm</div>
<div class="t" style="left:519.90px;top:271.00px;font-size:11.40px;line-height:12.00px;color:#222;font-weight:400;">11/19/2019</div>
<div class="t" style="left:583.20px;top:271.00px;font-size:10.80px;line-height:12.00px;color:#222;font-weight:400;">Transaction</div>
<div class="t" style="left:721.80px;top:271.00px;font-size:10.80px;line-height:12.00px;color:#222;font-weight:400;">sold</div>
<div class="t" style="left:913.80px;top:271.00px;font-size:10.80px;line-height:12.00px;color:#222;font-weight:400;">Sold</div>
<div class="t" style="left:967.50px;top:271.00px;font-size:10.80px;line-height:12.00px;color:#222;font-weight:400;">-4.00</div>
<div class="t" style="left:1020.50px;top:271.00px;font-size:10.80px;line-height:12.00px;color:#222;font-weight:400;">ea</div>
<div class="t" style="left:1073.60px;top:271.00px;font-size:10.80px;line-height:12.00px;color:#222;font-weight:400;">-339.99</div>
<div class="t" style="left:1127.40px;top:271.00px;font-size:10.80px;line-height:12.00px;color:#222;font-weight:400;">Pretoria</div>
<svg style="position:absolute;left:22px;top:268px" width="5" height="5"><polygon points="0,0 5,0 0,5" fill="#1a7a3a"/></svg>
<div class="t" style="left:24.80px;top:287.00px;font-size:10.60px;line-height:12.00px;color:#222;font-weight:400;">659843</div>
<div class="t" style="left:78.80px;top:287.00px;font-size:10.80px;line-height:12.00px;color:#222;font-weight:400;">Nuts 7mm</div>
<div class="t" style="left:188.40px;top:287.00px;font-size:10.80px;line-height:12.00px;color:#222;font-weight:400;">Nuts</div>
<div class="t" style="left:298.50px;top:287.00px;font-size:10.80px;line-height:12.00px;color:#222;font-weight:400;">7mm</div>
<div class="t" style="left:519.90px;top:287.00px;font-size:11.40px;line-height:12.00px;color:#222;font-weight:400;">11/8/2019</div>
<div class="t" style="left:583.20px;top:287.00px;font-size:10.80px;line-height:12.00px;color:#222;font-weight:400;">Transaction</div>
<div class="t" style="left:721.80px;top:287.00px;font-size:10.80px;line-height:12.00px;color:#222;font-weight:400;">Sold</div>
<div class="t" style="left:913.80px;top:287.00px;font-size:10.80px;line-height:12.00px;color:#222;font-weight:400;">Sold</div>
<div class="t" style="left:967.50px;top:287.00px;font-size:10.80px;line-height:12.00px;color:#222;font-weight:400;">-6.00</div>
<div class="t" style="left:1020.50px;top:287.00px;font-size:10.80px;line-height:12.00px;color:#222;font-weight:400;">ea</div>
<div class="t" style="left:1073.60px;top:287.00px;font-size:10.80px;line-height:12.00px;color:#222;font-weight:400;">-509.98</div>
<div class="t" style="left:1127.40px;top:287.00px;font-size:10.80px;line-height:12.00px;color:#222;font-weight:400;">Pietermaritzburg</div>
<svg style="position:absolute;left:22px;top:284px" width="5" height="5"><polygon points="0,0 5,0 0,5" fill="#1a7a3a"/></svg>
<div class="t" style="left:24.80px;top:303.00px;font-size:10.60px;line-height:12.00px;color:#222;font-weight:400;">659843</div>
<div class="t" style="left:78.80px;top:303.00px;font-size:10.80px;line-height:12.00px;color:#222;font-weight:400;">Nuts 7mm</div>
<div class="t" style="left:188.40px;top:303.00px;font-size:10.80px;line-height:12.00px;color:#222;font-weight:400;">Nuts</div>
<div class="t" style="left:298.50px;top:303.00px;font-size:10.80px;line-height:12.00px;color:#222;font-weight:400;">7mm</div>
<div class="t" style="left:408.30px;top:304.00px;font-size:10.10px;line-height:11.00px;color:#222;font-weight:400;">PO12345</div>
<div class="t" style="left:519.90px;top:303.00px;font-size:11.40px;line-height:12.00px;color:#222;font-weight:400;">11/6/2019</div>
<div class="t" style="left:583.20px;top:303.00px;font-size:10.80px;line-height:12.00px;color:#222;font-weight:400;">Purchase order</div>
<div class="t" style="left:721.80px;top:303.00px;font-size:10.80px;line-height:12.00px;color:#222;font-weight:400;">purchase order</div>
<div class="t" style="left:860.30px;top:304.00px;font-size:10.40px;line-height:11.00px;color:#222;font-weight:400;">Purchased</div>
<div class="t" style="left:967.50px;top:303.00px;font-size:10.80px;line-height:12.00px;color:#222;font-weight:400;">30.00</div>
<div class="t" style="left:1020.50px;top:303.00px;font-size:10.80px;line-height:12.00px;color:#222;font-weight:400;">ea</div>
<div class="t" style="left:1073.60px;top:303.00px;font-size:10.80px;line-height:12.00px;color:#222;font-weight:400;">2550</div>
<div class="t" style="left:1127.40px;top:303.00px;font-size:10.80px;line-height:12.00px;color:#222;font-weight:400;">Pretoria</div>
<svg style="position:absolute;left:22px;top:300px" width="5" height="5"><polygon points="0,0 5,0 0,5" fill="#1a7a3a"/></svg>
<div class="t" style="left:24.80px;top:319.00px;font-size:10.60px;line-height:12.00px;color:#222;font-weight:400;">659843</div>
<div class="t" style="left:78.80px;top:319.00px;font-size:10.80px;line-height:12.00px;color:#222;font-weight:400;">Nuts 7mm</div>
<div class="t" style="left:188.40px;top:319.00px;font-size:10.80px;line-height:12.00px;color:#222;font-weight:400;">Nuts</div>
<div class="t" style="left:298.50px;top:319.00px;font-size:10.80px;line-height:12.00px;color:#222;font-weight:400;">7mm</div>
<div class="t" style="left:408.30px;top:320.00px;font-size:10.10px;line-height:11.00px;color:#222;font-weight:400;">PO678910</div>
<div class="t" style="left:519.90px;top:319.00px;font-size:11.40px;line-height:12.00px;color:#222;font-weight:400;">11/6/2019</div>
<div class="t" style="left:583.20px;top:319.00px;font-size:10.80px;line-height:12.00px;color:#222;font-weight:400;">Purchase order</div>
<div class="t" style="left:721.80px;top:320.00px;font-size:10.10px;line-height:11.00px;color:#222;font-weight:400;">PO</div>
<div class="t" style="left:860.30px;top:320.00px;font-size:10.40px;line-height:11.00px;color:#222;font-weight:400;">Purchased</div>
<div class="t" style="left:967.50px;top:319.00px;font-size:10.80px;line-height:12.00px;color:#222;font-weight:400;">20.00</div>
<div class="t" style="left:1020.50px;top:319.00px;font-size:10.80px;line-height:12.00px;color:#222;font-weight:400;">ea</div>
<div class="t" style="left:1073.60px;top:319.00px;font-size:10.80px;line-height:12.00px;color:#222;font-weight:400;">1700</div>
<div class="t" style="left:1127.40px;top:319.00px;font-size:10.80px;line-height:12.00px;color:#222;font-weight:400;">Pretoria</div>
<svg style="position:absolute;left:22px;top:316px" width="5" height="5"><polygon points="0,0 5,0 0,5" fill="#1a7a3a"/></svg>
<div class="t" style="left:24.80px;top:335.00px;font-size:10.60px;line-height:12.00px;color:#222;font-weight:400;">659843</div>
<div class="t" style="left:78.80px;top:335.00px;font-size:10.80px;line-height:12.00px;color:#222;font-weight:400;">Nuts 7mm</div>
<div class="t" style="left:188.40px;top:335.00px;font-size:10.80px;line-height:12.00px;color:#222;font-weight:400;">Nuts</div>
<div class="t" style="left:298.50px;top:335.00px;font-size:10.80px;line-height:12.00px;color:#222;font-weight:400;">7mm</div>
<div class="t" style="left:519.90px;top:335.00px;font-size:11.40px;line-height:12.00px;color:#222;font-weight:400;">11/4/2019</div>
<div class="t" style="left:583.20px;top:335.00px;font-size:10.80px;line-height:12.00px;color:#222;font-weight:400;">Transaction</div>
<div class="t" style="left:721.80px;top:335.00px;font-size:10.80px;line-height:12.00px;color:#222;font-weight:400;">sold</div>
<div class="t" style="left:913.80px;top:335.00px;font-size:10.80px;line-height:12.00px;color:#222;font-weight:400;">Sold</div>
<div class="t" style="left:967.50px;top:335.00px;font-size:10.80px;line-height:12.00px;color:#222;font-weight:400;">-10.00</div>
<div class="t" style="left:1020.50px;top:335.00px;font-size:10.80px;line-height:12.00px;color:#222;font-weight:400;">ea</div>
<div class="t" style="left:1073.60px;top:335.00px;font-size:10.80px;line-height:12.00px;color:#222;font-weight:400;">-849.97</div>
<div class="t" style="left:1127.40px;top:335.00px;font-size:10.80px;line-height:12.00px;color:#222;font-weight:400;">Pietermaritzburg</div>
<svg style="position:absolute;left:22px;top:332px" width="5" height="5"><polygon points="0,0 5,0 0,5" fill="#1a7a3a"/></svg>
<div class="t" style="left:24.80px;top:351.00px;font-size:10.60px;line-height:12.00px;color:#222;font-weight:400;">659843</div>
<div class="t" style="left:78.80px;top:351.00px;font-size:10.80px;line-height:12.00px;color:#222;font-weight:400;">Nuts 7mm</div>
<div class="t" style="left:188.40px;top:351.00px;font-size:10.80px;line-height:12.00px;color:#222;font-weight:400;">Nuts</div>
<div class="t" style="left:298.50px;top:351.00px;font-size:10.80px;line-height:12.00px;color:#222;font-weight:400;">7mm</div>
<div class="t" style="left:519.90px;top:351.00px;font-size:11.40px;line-height:12.00px;color:#222;font-weight:400;">10/31/2019</div>
<div class="t" style="left:583.20px;top:351.00px;font-size:10.80px;line-height:12.00px;color:#222;font-weight:400;">Transaction</div>
<div class="t" style="left:721.80px;top:351.00px;font-size:10.80px;line-height:12.00px;color:#222;font-weight:400;">sold</div>
<div class="t" style="left:913.80px;top:351.00px;font-size:10.80px;line-height:12.00px;color:#222;font-weight:400;">Sold</div>
<div class="t" style="left:967.50px;top:351.00px;font-size:10.80px;line-height:12.00px;color:#222;font-weight:400;">-4.00</div>
<div class="t" style="left:1020.50px;top:351.00px;font-size:10.80px;line-height:12.00px;color:#222;font-weight:400;">ea</div>
<div class="t" style="left:1073.60px;top:351.00px;font-size:10.80px;line-height:12.00px;color:#222;font-weight:400;">-339.99</div>
<div class="t" style="left:1127.40px;top:351.00px;font-size:10.80px;line-height:12.00px;color:#222;font-weight:400;">Pietermaritzburg</div>
<svg style="position:absolute;left:22px;top:348px" width="5" height="5"><polygon points="0,0 5,0 0,5" fill="#1a7a3a"/></svg>
<div class="t" style="left:24.80px;top:367.00px;font-size:10.60px;line-height:12.00px;color:#222;font-weight:400;">659843</div>
<div class="t" style="left:78.80px;top:367.00px;font-size:10.80px;line-height:12.00px;color:#222;font-weight:400;">Nuts 7mm</div>
<div class="t" style="left:188.40px;top:367.00px;font-size:10.80px;line-height:12.00px;color:#222;font-weight:400;">Nuts</div>
<div class="t" style="left:298.50px;top:367.00px;font-size:10.80px;line-height:12.00px;color:#222;font-weight:400;">7mm</div>
<div class="t" style="left:519.90px;top:367.00px;font-size:11.40px;line-height:12.00px;color:#222;font-weight:400;">10/30/2019</div>
<div class="t" style="left:583.20px;top:367.00px;font-size:10.80px;line-height:12.00px;color:#222;font-weight:400;">Transaction</div>
<div class="t" style="left:721.80px;top:367.00px;font-size:10.80px;line-height:12.00px;color:#222;font-weight:400;">Sell</div>
<div class="t" style="left:913.80px;top:367.00px;font-size:10.80px;line-height:12.00px;color:#222;font-weight:400;">Sold</div>
<div class="t" style="left:967.50px;top:367.00px;font-size:10.80px;line-height:12.00px;color:#222;font-weight:400;">-20.00</div>
<div class="t" style="left:1020.50px;top:367.00px;font-size:10.80px;line-height:12.00px;color:#222;font-weight:400;">ea</div>
<div class="t" style="left:1073.60px;top:367.00px;font-size:10.80px;line-height:12.00px;color:#222;font-weight:400;">-1699.94</div>
<div class="t" style="left:1127.40px;top:367.00px;font-size:10.80px;line-height:12.00px;color:#222;font-weight:400;">Bloemfontein</div>
<svg style="position:absolute;left:22px;top:364px" width="5" height="5"><polygon points="0,0 5,0 0,5" fill="#1a7a3a"/></svg>
<div class="t" style="left:24.80px;top:383.00px;font-size:10.60px;line-height:12.00px;color:#222;font-weight:400;">659843</div>
<div class="t" style="left:78.80px;top:383.00px;font-size:10.80px;line-height:12.00px;color:#222;font-weight:400;">Nuts 7mm</div>
<div class="t" style="left:188.40px;top:383.00px;font-size:10.80px;line-height:12.00px;color:#222;font-weight:400;">Nuts</div>
<div class="t" style="left:298.50px;top:383.00px;font-size:10.80px;line-height:12.00px;color:#222;font-weight:400;">7mm</div>
<div class="t" style="left:408.30px;top:384.00px;font-size:10.10px;line-height:11.00px;color:#222;font-weight:400;">PO12345</div>
<div class="t" style="left:519.90px;top:383.00px;font-size:11.40px;line-height:12.00px;color:#222;font-weight:400;">10/29/2019</div>
<div class="t" style="left:583.20px;top:383.00px;font-size:10.80px;line-height:12.00px;color:#222;font-weight:400;">Purchase order</div>
<div class="t" style="left:721.80px;top:384.00px;font-size:10.10px;line-height:11.00px;color:#222;font-weight:400;">PO</div>
<div class="t" style="left:860.30px;top:384.00px;font-size:10.40px;line-height:11.00px;color:#222;font-weight:400;">Purchased</div>
<div class="t" style="left:967.50px;top:383.00px;font-size:10.80px;line-height:12.00px;color:#222;font-weight:400;">30.00</div>
<div class="t" style="left:1020.50px;top:383.00px;font-size:10.80px;line-height:12.00px;color:#222;font-weight:400;">ea</div>
<div class="t" style="left:1073.60px;top:383.00px;font-size:10.80px;line-height:12.00px;color:#222;font-weight:400;">2550</div>
<div class="t" style="left:1127.40px;top:383.00px;font-size:10.80px;line-height:12.00px;color:#222;font-weight:400;">Pietermaritzburg</div>
<svg style="position:absolute;left:22px;top:380px" width="5" height="5"><polygon points="0,0 5,0 0,5" fill="#1a7a3a"/></svg>
<div class="t" style="left:24.80px;top:399.00px;font-size:10.60px;line-height:12.00px;color:#222;font-weight:400;">659843</div>
<div class="t" style="left:78.80px;top:399.00px;font-size:10.80px;line-height:12.00px;color:#222;font-weight:400;">Nuts 7mm</div>
<div class="t" style="left:188.40px;top:399.00px;font-size:10.80px;line-height:12.00px;color:#222;font-weight:400;">Nuts</div>
<div class="t" style="left:298.50px;top:399.00px;font-size:10.80px;line-height:12.00px;color:#222;font-weight:400;">7mm</div>
<div class="t" style="left:519.90px;top:399.00px;font-size:11.40px;line-height:12.00px;color:#222;font-weight:400;">10/28/2019</div>
<div class="t" style="left:583.20px;top:399.00px;font-size:10.80px;line-height:12.00px;color:#222;font-weight:400;">Transaction</div>
<div class="t" style="left:721.80px;top:399.00px;font-size:10.80px;line-height:12.00px;color:#222;font-weight:400;">sold</div>
<svg style="position:absolute;left:22px;top:396px" width="5" height="5"><polygon points="0,0 5,0 0,5" fill="#1a7a3a"/></svg>
<div class="t" style="left:24.80px;top:415.00px;font-size:10.60px;line-height:12.00px;color:#222;font-weight:400;">659843</div>
<div class="t" style="left:78.80px;top:415.00px;font-size:10.80px;line-height:12.00px;color:#222;font-weight:400;">Nuts 7mm</div>
<div class="t" style="left:188.40px;top:415.00px;font-size:10.80px;line-height:12.00px;color:#222;font-weight:400;">Nuts</div>
<div class="t" style="left:298.50px;top:415.00px;font-size:10.80px;line-height:12.00px;color:#222;font-weight:400;">7mm</div>
<div class="t" style="left:519.90px;top:415.00px;font-size:11.40px;line-height:12.00px;color:#222;font-weight:400;">10/28/2019</div>
<div class="t" style="left:583.20px;top:415.00px;font-size:10.80px;line-height:12.00px;color:#222;font-weight:400;">Transaction</div>
<div class="t" style="left:721.80px;top:415.00px;font-size:10.80px;line-height:12.00px;color:#222;font-weight:400;">Sold</div>
<svg style="position:absolute;left:22px;top:412px" width="5" height="5"><polygon points="0,0 5,0 0,5" fill="#1a7a3a"/></svg>
<div class="t" style="left:24.80px;top:431.00px;font-size:10.60px;line-height:12.00px;color:#222;font-weight:400;">659843</div>
<div class="t" style="left:78.80px;top:431.00px;font-size:10.80px;line-height:12.00px;color:#222;font-weight:400;">Nuts 7mm</div>
<div class="t" style="left:188.40px;top:431.00px;font-size:10.80px;line-height:12.00px;color:#222;font-weight:400;">Nuts</div>
<div class="t" style="left:298.50px;top:431.00px;font-size:10.80px;line-height:12.00px;color:#222;font-weight:400;">7mm</div>
<div class="t" style="left:519.90px;top:431.00px;font-size:11.40px;line-height:12.00px;color:#222;font-weight:400;">10/28/2019</div>
<div class="t" style="left:583.20px;top:431.00px;font-size:10.80px;line-height:12.00px;color:#222;font-weight:400;">Transaction</div>
<div class="t" style="left:721.80px;top:431.00px;font-size:10.80px;line-height:12.00px;color:#222;font-weight:400;">sell</div>
<svg style="position:absolute;left:22px;top:428px" width="5" height="5"><polygon points="0,0 5,0 0,5" fill="#1a7a3a"/></svg>
<div class="t" style="left:24.80px;top:447.00px;font-size:10.60px;line-height:12.00px;color:#222;font-weight:400;">659843</div>
<div class="t" style="left:78.80px;top:447.00px;font-size:10.80px;line-height:12.00px;color:#222;font-weight:400;">Nuts 7mm</div>
<div class="t" style="left:188.40px;top:447.00px;font-size:10.80px;line-height:12.00px;color:#222;font-weight:400;">Nuts</div>
<div class="t" style="left:298.50px;top:447.00px;font-size:10.80px;line-height:12.00px;color:#222;font-weight:400;">7mm</div>
<div class="t" style="left:519.90px;top:447.00px;font-size:11.40px;line-height:12.00px;color:#222;font-weight:400;">10/23/2019</div>
<div class="t" style="left:583.20px;top:447.00px;font-size:10.80px;line-height:12.00px;color:#222;font-weight:400;">Purchase order</div>
<div class="t" style="left:721.80px;top:447.00px;font-size:10.80px;line-height:12.00px;color:#222;font-weight:400;">Purchases</div>
<svg style="position:absolute;left:22px;top:444px" width="5" height="5"><polygon points="0,0 5,0 0,5" fill="#1a7a3a"/></svg>
<div class="t" style="left:24.80px;top:463.00px;font-size:10.60px;line-height:12.00px;color:#222;font-weight:400;">659843</div>
<div class="t" style="left:78.80px;top:463.00px;font-size:10.80px;line-height:12.00px;color:#222;font-weight:400;">Nuts 7mm</div>
<div class="t" style="left:188.40px;top:463.00px;font-size:10.80px;line-height:12.00px;color:#222;font-weight:400;">Nuts</div>
<div class="t" style="left:298.50px;top:463.00px;font-size:10.80px;line-height:12.00px;color:#222;font-weight:400;">7mm</div>
<div class="t" style="left:519.90px;top:463.00px;font-size:11.40px;line-height:12.00px;color:#222;font-weight:400;">10/23/2019</div>
<div class="t" style="left:583.20px;top:463.00px;font-size:10.80px;line-height:12.00px;color:#222;font-weight:400;">Purchase order</div>
<div class="t" style="left:721.80px;top:463.00px;font-size:10.80px;line-height:12.00px;color:#222;font-weight:400;">sell</div>
<svg style="position:absolute;left:22px;top:460px" width="5" height="5"><polygon points="0,0 5,0 0,5" fill="#1a7a3a"/></svg>
<div class="t" style="left:24.80px;top:479.00px;font-size:10.60px;line-height:12.00px;color:#222;font-weight:400;">659843</div>
<div class="t" style="left:78.80px;top:479.00px;font-size:10.80px;line-height:12.00px;color:#222;font-weight:400;">Nuts 7mm</div>
<div class="t" style="left:188.40px;top:479.00px;font-size:10.80px;line-height:12.00px;color:#222;font-weight:400;">Nuts</div>
<div class="t" style="left:298.50px;top:479.00px;font-size:10.80px;line-height:12.00px;color:#222;font-weight:400;">7mm</div>
<div class="t" style="left:519.90px;top:479.00px;font-size:11.40px;line-height:12.00px;color:#222;font-weight:400;">10/22/2019</div>
<div class="t" style="left:583.20px;top:479.00px;font-size:10.80px;line-height:12.00px;color:#222;font-weight:400;">Transaction</div>
<div class="t" style="left:721.80px;top:479.00px;font-size:10.80px;line-height:12.00px;color:#222;font-weight:400;">Seld</div>
<svg style="position:absolute;left:22px;top:476px" width="5" height="5"><polygon points="0,0 5,0 0,5" fill="#1a7a3a"/></svg>
<div class="t" style="left:24.80px;top:495.00px;font-size:10.60px;line-height:12.00px;color:#222;font-weight:400;">659843</div>
<div class="t" style="left:78.80px;top:495.00px;font-size:10.80px;line-height:12.00px;color:#222;font-weight:400;">Nuts 7mm</div>
<div class="t" style="left:188.40px;top:495.00px;font-size:10.80px;line-height:12.00px;color:#222;font-weight:400;">Nuts</div>
<div class="t" style="left:298.50px;top:495.00px;font-size:10.80px;line-height:12.00px;color:#222;font-weight:400;">7mm</div>
<div class="t" style="left:408.30px;top:496.00px;font-size:10.10px;line-height:11.00px;color:#222;font-weight:400;">PO12345</div>
<div class="t" style="left:519.90px;top:495.00px;font-size:11.40px;line-height:12.00px;color:#222;font-weight:400;">10/22/2019</div>
<div class="t" style="left:583.20px;top:495.00px;font-size:10.80px;line-height:12.00px;color:#222;font-weight:400;">Purchase order</div>
<div class="t" style="left:721.80px;top:495.00px;font-size:10.80px;line-height:12.00px;color:#222;font-weight:400;">Purchase Order</div>
<svg style="position:absolute;left:22px;top:492px" width="5" height="5"><polygon points="0,0 5,0 0,5" fill="#1a7a3a"/></svg>
<div class="t" style="left:24.80px;top:511.00px;font-size:10.60px;line-height:12.00px;color:#222;font-weight:400;">659843</div>
<div class="t" style="left:78.80px;top:511.00px;font-size:10.80px;line-height:12.00px;color:#222;font-weight:400;">Nuts 7mm</div>
<div class="t" style="left:188.40px;top:511.00px;font-size:10.80px;line-height:12.00px;color:#222;font-weight:400;">Nuts</div>
<div class="t" style="left:298.50px;top:511.00px;font-size:10.80px;line-height:12.00px;color:#222;font-weight:400;">7mm</div>
<div class="t" style="left:408.30px;top:512.00px;font-size:10.10px;line-height:11.00px;color:#222;font-weight:400;">PO12345</div>
<div class="t" style="left:519.90px;top:511.00px;font-size:11.40px;line-height:12.00px;color:#222;font-weight:400;">10/22/2019</div>
<div class="t" style="left:583.20px;top:511.00px;font-size:10.80px;line-height:12.00px;color:#222;font-weight:400;">Purchase order</div>
<div class="t" style="left:721.80px;top:511.00px;font-size:10.80px;line-height:12.00px;color:#222;font-weight:400;">Purchas Order</div>
<svg style="position:absolute;left:22px;top:508px" width="5" height="5"><polygon points="0,0 5,0 0,5" fill="#1a7a3a"/></svg>
<div class="t" style="left:24.80px;top:527.00px;font-size:10.60px;line-height:12.00px;color:#222;font-weight:400;">659843</div>
<div class="t" style="left:78.80px;top:527.00px;font-size:10.80px;line-height:12.00px;color:#222;font-weight:400;">Nuts 7mm</div>
<div class="t" style="left:188.40px;top:527.00px;font-size:10.80px;line-height:12.00px;color:#222;font-weight:400;">Nuts</div>
<div class="t" style="left:298.50px;top:527.00px;font-size:10.80px;line-height:12.00px;color:#222;font-weight:400;">7mm</div>
<div class="t" style="left:519.90px;top:527.00px;font-size:11.40px;line-height:12.00px;color:#222;font-weight:400;">10/21/2019</div>
<div class="t" style="left:583.20px;top:527.00px;font-size:10.80px;line-height:12.00px;color:#222;font-weight:400;">Transaction</div>
<div class="t" style="left:721.80px;top:527.00px;font-size:10.80px;line-height:12.00px;color:#222;font-weight:400;">Seld</div>
<svg style="position:absolute;left:22px;top:524px" width="5" height="5"><polygon points="0,0 5,0 0,5" fill="#1a7a3a"/></svg>
<div class="t" style="left:24.80px;top:543.00px;font-size:10.60px;line-height:12.00px;color:#222;font-weight:400;">659843</div>
<div class="t" style="left:78.80px;top:543.00px;font-size:10.80px;line-height:12.00px;color:#222;font-weight:400;">Nuts 7mm</div>
<div class="t" style="left:188.40px;top:543.00px;font-size:10.80px;line-height:12.00px;color:#222;font-weight:400;">Nuts</div>
<div class="t" style="left:298.50px;top:543.00px;font-size:10.80px;line-height:12.00px;color:#222;font-weight:400;">7mm</div>
<div class="t" style="left:519.90px;top:543.00px;font-size:11.40px;line-height:12.00px;color:#222;font-weight:400;">10/18/2019</div>
<div class="t" style="left:583.20px;top:543.00px;font-size:10.80px;line-height:12.00px;color:#222;font-weight:400;">Purchase order</div>
<div class="t" style="left:721.80px;top:543.00px;font-size:10.80px;line-height:12.00px;color:#222;font-weight:400;">Purchas Order</div>
<svg style="position:absolute;left:22px;top:540px" width="5" height="5"><polygon points="0,0 5,0 0,5" fill="#1a7a3a"/></svg>
<div class="t" style="left:24.80px;top:559.00px;font-size:10.60px;line-height:12.00px;color:#222;font-weight:400;">659843</div>
<div class="t" style="left:78.80px;top:559.00px;font-size:10.80px;line-height:12.00px;color:#222;font-weight:400;">Nuts 7mm</div>
<div class="t" style="left:188.40px;top:559.00px;font-size:10.80px;line-height:12.00px;color:#222;font-weight:400;">Nuts</div>
<div class="t" style="left:298.50px;top:559.00px;font-size:10.80px;line-height:12.00px;color:#222;font-weight:400;">7mm</div>
<div class="t" style="left:519.90px;top:559.00px;font-size:11.40px;line-height:12.00px;color:#222;font-weight:400;">10/14/2019</div>
<div class="t" style="left:583.20px;top:559.00px;font-size:10.80px;line-height:12.00px;color:#222;font-weight:400;">Purchase order</div>
<div class="t" style="left:721.80px;top:559.00px;font-size:10.80px;line-height:12.00px;color:#222;font-weight:400;">Purchas Order</div>
<svg style="position:absolute;left:22px;top:556px" width="5" height="5"><polygon points="0,0 5,0 0,5" fill="#1a7a3a"/></svg>
<div class="t" style="left:24.80px;top:575.00px;font-size:10.60px;line-height:12.00px;color:#222;font-weight:400;">659843</div>
<div class="t" style="left:78.80px;top:575.00px;font-size:10.80px;line-height:12.00px;color:#222;font-weight:400;">Nuts 7mm</div>
<div class="t" style="left:188.40px;top:575.00px;font-size:10.80px;line-height:12.00px;color:#222;font-weight:400;">Nuts</div>
<div class="t" style="left:298.50px;top:575.00px;font-size:10.80px;line-height:12.00px;color:#222;font-weight:400;">7mm</div>
<div class="t" style="left:519.90px;top:575.00px;font-size:11.40px;line-height:12.00px;color:#222;font-weight:400;">10/11/2019</div>
<div class="t" style="left:583.20px;top:575.00px;font-size:10.80px;line-height:12.00px;color:#222;font-weight:400;">Transaction</div>
<div class="t" style="left:721.80px;top:575.00px;font-size:10.80px;line-height:12.00px;color:#222;font-weight:400;">sell</div>
<svg style="position:absolute;left:22px;top:572px" width="5" height="5"><polygon points="0,0 5,0 0,5" fill="#1a7a3a"/></svg>
<div class="t" style="left:24.80px;top:591.00px;font-size:10.60px;line-height:12.00px;color:#222;font-weight:400;">659843</div>
<div class="t" style="left:78.80px;top:591.00px;font-size:10.80px;line-height:12.00px;color:#222;font-weight:400;">Nuts 7mm</div>
<div class="t" style="left:188.40px;top:591.00px;font-size:10.80px;line-height:12.00px;color:#222;font-weight:400;">Nuts</div>
<div class="t" style="left:298.50px;top:591.00px;font-size:10.80px;line-height:12.00px;color:#222;font-weight:400;">7mm</div>
<div class="t" style="left:519.90px;top:591.00px;font-size:11.40px;line-height:12.00px;color:#222;font-weight:400;">10/11/2019</div>
<div class="t" style="left:583.20px;top:591.00px;font-size:10.80px;line-height:12.00px;color:#222;font-weight:400;">Transaction</div>
<div class="t" style="left:721.80px;top:591.00px;font-size:10.80px;line-height:12.00px;color:#222;font-weight:400;">seld</div>
<svg style="position:absolute;left:22px;top:588px" width="5" height="5"><polygon points="0,0 5,0 0,5" fill="#1a7a3a"/></svg>
<div class="t" style="left:24.80px;top:607.00px;font-size:10.60px;line-height:12.00px;color:#222;font-weight:400;">659843</div>
<div class="t" style="left:78.80px;top:607.00px;font-size:10.80px;line-height:12.00px;color:#222;font-weight:400;">Nuts 7mm</div>
<div class="t" style="left:188.40px;top:607.00px;font-size:10.80px;line-height:12.00px;color:#222;font-weight:400;">Nuts</div>
<div class="t" style="left:298.50px;top:607.00px;font-size:10.80px;line-height:12.00px;color:#222;font-weight:400;">7mm</div>
<div class="t" style="left:519.90px;top:607.00px;font-size:11.40px;line-height:12.00px;color:#222;font-weight:400;">10/11/2019</div>
<div class="t" style="left:583.20px;top:607.00px;font-size:10.80px;line-height:12.00px;color:#222;font-weight:400;">Transaction</div>
<div class="t" style="left:721.80px;top:607.00px;font-size:10.80px;line-height:12.00px;color:#222;font-weight:400;">sell</div>
<svg style="position:absolute;left:22px;top:604px" width="5" height="5"><polygon points="0,0 5,0 0,5" fill="#1a7a3a"/></svg>
<div class="t" style="left:24.80px;top:623.00px;font-size:10.60px;line-height:12.00px;color:#222;font-weight:400;">659843</div>
<div class="t" style="left:78.80px;top:623.00px;font-size:10.80px;line-height:12.00px;color:#222;font-weight:400;">Nuts 7mm</div>
<div class="t" style="left:188.40px;top:623.00px;font-size:10.80px;line-height:12.00px;color:#222;font-weight:400;">Nuts</div>
<div class="t" style="left:298.50px;top:623.00px;font-size:10.80px;line-height:12.00px;color:#222;font-weight:400;">7mm</div>
<div class="t" style="left:519.90px;top:623.00px;font-size:11.40px;line-height:12.00px;color:#222;font-weight:400;">10/11/2019</div>
<div class="t" style="left:583.20px;top:623.00px;font-size:10.80px;line-height:12.00px;color:#222;font-weight:400;">Purchase order</div>
<div class="t" style="left:721.80px;top:623.00px;font-size:10.80px;line-height:12.00px;color:#222;font-weight:400;">purhase order</div>
<svg style="position:absolute;left:22px;top:620px" width="5" height="5"><polygon points="0,0 5,0 0,5" fill="#1a7a3a"/></svg>
<div class="t" style="left:24.80px;top:639.00px;font-size:10.60px;line-height:12.00px;color:#222;font-weight:400;">659843</div>
<div class="t" style="left:78.80px;top:639.00px;font-size:10.80px;line-height:12.00px;color:#222;font-weight:400;">Nuts 7mm</div>
<div class="t" style="left:188.40px;top:639.00px;font-size:10.80px;line-height:12.00px;color:#222;font-weight:400;">Nuts</div>
<div class="t" style="left:298.50px;top:639.00px;font-size:10.80px;line-height:12.00px;color:#222;font-weight:400;">7mm</div>
<div class="t" style="left:519.90px;top:639.00px;font-size:11.40px;line-height:12.00px;color:#222;font-weight:400;">10/4/2019</div>
<div class="t" style="left:583.20px;top:639.00px;font-size:10.80px;line-height:12.00px;color:#222;font-weight:400;">Transaction</div>
<div class="t" style="left:721.80px;top:639.00px;font-size:10.80px;line-height:12.00px;color:#222;font-weight:400;">Sell</div>
<svg style="position:absolute;left:22px;top:636px" width="5" height="5"><polygon points="0,0 5,0 0,5" fill="#1a7a3a"/></svg>
<div style="left:405.0px;top:363px;width:109.60000000000002px;height:15px;border:2px solid #217346;background:transparent"></div>
<div style="left:514.1px;top:377.5px;width:5px;height:5px;background:#217346;border:1px solid #fff"></div>
<div style="left:1264px;top:168px;width:16px;height:480px;background:#e9e9e9"></div>
<div style="left:1265.7px;top:170.5px;width:11.8px;height:11.5px;background:#fff"></div>
<svg style="position:absolute;left:1268px;top:174px" width="8" height="5"><polygon points="4,0 8,4.5 0,4.5" fill="#606060"/></svg>
<div style="left:1265.7px;top:184px;width:11.8px;height:130px;background:#fff;border:1px solid #d0d0d0;box-sizing:border-box"></div>
<div style="left:0px;top:649px;width:853px;height:19px;background:#e9e9e9"></div>
<div style="left:0px;top:648.5px;width:853px;height:1px;background:#d0d0d0"></div>
<div style="left:68.75px;top:649.4px;width:78px;height:16px;background:linear-gradient(#fdf3f0 0%,#f8c4b4 60%,#f4a690 100%)"></div>
<div style="left:68.75px;top:664.5px;width:78px;height:2px;background:#217346"></div>
<div class="t" style="left:76.50px;top:649.60px;font-size:10.94px;line-height:12.00px;color:#2a6a48;font-weight:700;">Spell Check</div>
<div class="t" style="left:155.74px;width:132.03px;text-align:center;top:649.60px;font-size:11.20px;line-height:12.00px;color:#555;font-weight:400;">Remove Duplicate Values</div>
<div class="t" style="left:304.86px;width:91.78px;text-align:center;top:649.60px;font-size:11.20px;line-height:12.00px;color:#555;font-weight:400;">Find and Replace</div>
<div class="t" style="left:411.74px;width:60.02px;text-align:center;top:649.60px;font-size:11.20px;line-height:12.00px;color:#555;font-weight:400;">Blank Cells</div>
<div class="t" style="left:488.51px;width:80.98px;text-align:center;top:649.60px;font-size:11.20px;line-height:12.00px;color:#555;font-weight:400;">Text To Column</div>
<div class="t" style="left:584.43px;width:30.14px;text-align:center;top:649.60px;font-size:11.20px;line-height:12.00px;color:#555;font-weight:400;">Case</div>
<div class="t" style="left:626.76px;width:25.97px;text-align:center;top:649.60px;font-size:11.20px;line-height:12.00px;color:#555;font-weight:400;">Trim</div>
<div class="t" style="left:670.53px;width:82.44px;text-align:center;top:649.60px;font-size:11.20px;line-height:12.00px;color:#555;font-weight:400;">Merge and Split</div>
<div class="t" style="left:771.26px;width:44.47px;text-align:center;top:649.60px;font-size:11.20px;line-height:12.00px;color:#555;font-weight:400;">Vlookup</div>
<div style="left:297px;top:653px;width:1px;height:12px;background:#bdbdbd"></div>
<div style="left:404.5px;top:653px;width:1px;height:12px;background:#bdbdbd"></div>
<div style="left:478.5px;top:653px;width:1px;height:12px;background:#bdbdbd"></div>
<div style="left:579px;top:653px;width:1px;height:12px;background:#bdbdbd"></div>
<div style="left:620px;top:653px;width:1px;height:12px;background:#bdbdbd"></div>
<div style="left:661px;top:653px;width:1px;height:12px;background:#bdbdbd"></div>
<div style="left:762px;top:653px;width:1px;height:12px;background:#bdbdbd"></div>
<div style="left:824px;top:653px;width:1px;height:12px;background:#bdbdbd"></div>
<svg style="position:absolute;left:18px;top:654px" width="30" height="10"><polygon points="4,1 0,5 4,9" fill="#c8c8c8"/><polygon points="20,1 24,5 20,9" fill="#c8c8c8"/></svg>
<div style="left:845px;top:650px;width:14px;height:14px;border-radius:50%;border:1px solid #888;box-sizing:border-box"></div>
<svg style="position:absolute;left:845px;top:650px" width="14" height="14"><path d="M7,3.5 V10.5 M3.5,7 H10.5" stroke="#777" stroke-width="1"/></svg>
<div style="left:0px;top:668px;width:853px;height:18px;background:#f3f3f3"></div>
<div class="t" style="left:5.50px;top:674.00px;font-size:8.13px;line-height:9.00px;color:#555;font-weight:400;">Ready</div>
<svg style="position:absolute;left:43px;top:671px" width="11" height="11"><rect x="0.5" y="2.5" width="10" height="8" fill="none" stroke="#777"/><line x1="0" y1="4" x2="11" y2="4" stroke="#777" stroke-width="2"/><circle cx="2" cy="1.8" r="1.6" fill="#777"/><g fill="#777"><rect x="2" y="6" width="1.5" height="1.2"/><rect x="4.7" y="6" width="1.5" height="1.2"/><rect x="7.4" y="6" width="1.5" height="1.2"/><rect x="2" y="8.3" width="1.5" height="1.2"/><rect x="4.7" y="8.3" width="1.5" height="1.2"/><rect x="7.4" y="8.3" width="1.5" height="1.2"/></g></svg>
<div style="left:0px;top:686px;width:853px;height:34px;background:#21303a"></div>
<div style="left:40px;top:686px;width:286px;height:34px;background:#f0f0f0"></div>
<div style="left:659px;top:686px;width:39px;height:34px;background:#3a4753"></div>
<div style="left:659px;top:717.5px;width:39px;height:2.5px;background:#7a8896"></div>
<div class="t" style="left:74.20px;top:698.00px;font-size:11.41px;line-height:12.00px;color:#444;font-weight:400;">Type here to search</div>
<svg style="position:absolute;left:0;top:0" width="1280" height="60" viewBox="0 0 1280 60"><path d="M109.8,8.5 H120.5 L122.8,10.8 V17 M115,21.8 H109.8 Z" fill="none" stroke="#e8f0ea" stroke-width="1.1"/><path d="M109.8,8.5 V21.8" stroke="#e8f0ea" stroke-width="1.1"/><path d="M112.5,8.5 V12.3 H119 V8.5" fill="none" stroke="#e8f0ea" stroke-width="1"/><path d="M117,17.5 A3.3,3.3 0 0 1 123,16.5 M123.2,19.5 A3.3,3.3 0 0 1 117.2,20.5" fill="none" stroke="#e8f0ea" stroke-width="1.1"/><polygon points="122,14.5 124,17 121.3,17.3" fill="#e8f0ea"/><polygon points="118,22.5 116,20 118.7,19.8" fill="#e8f0ea"/><path d="M135.5,13 C139,9 146.5,9.5 146.5,14.5 C146.5,17 142,19.5 139,21" fill="none" stroke="#e8f0ea" stroke-width="1.2"/><polyline points="135,8.2 135,13.5 140.5,13.5" fill="none" stroke="#e8f0ea" stroke-width="1.2"/><polygon points="151.6,12.4 155.2,12.4 153.4,14.2" fill="#e8f0ea"/><path d="M176,13 C172.5,9 165,9.5 165,14.5 C165,17 169.5,19.5 172.5,21" fill="none" stroke="#5f9c7c" stroke-width="1.2"/><polyline points="176.5,8.2 176.5,13.5 171,13.5" fill="none" stroke="#5f9c7c" stroke-width="1.2"/><polygon points="181.5,12.4 185.3,12.4 183.4,14.2" fill="#5f9c7c"/><rect x="194.3" y="11" width="13" height="9.3" fill="none" stroke="#e8f0ea" stroke-width="1.1"/><path d="M197,11 L198.5,9.3 H203 L204.5,11" fill="none" stroke="#e8f0ea" stroke-width="1"/><circle cx="200.8" cy="15.6" r="2.6" fill="none" stroke="#e8f0ea" stroke-width="1.1"/><rect x="195.8" y="12.3" width="1.2" height="1" fill="#e8f0ea"/><line x1="222.5" y1="11.9" x2="226.4" y2="11.9" stroke="#e8f0ea" stroke-width="0.9"/><polygon points="222.3,13.6 226.6,13.6 224.45,16.2" fill="#e8f0ea"/><rect x="1141.3" y="10.2" width="10" height="7.2" fill="none" stroke="#e8f0ea" stroke-width="1"/><path d="M1146.3,16.5 V12.3 M1144.4,14 L1146.3,12.2 L1148.2,14" fill="none" stroke="#e8f0ea" stroke-width="0.9"/><line x1="1180.5" y1="13.6" x2="1188.6" y2="13.6" stroke="#e8f0ea" stroke-width="1"/><rect x="1219.2" y="11.2" width="6.2" height="6.2" fill="none" stroke="#e8f0ea" stroke-width="1"/><path d="M1221,11.2 V9.7 H1226.8 V15.5 H1225.4" fill="none" stroke="#e8f0ea" stroke-width="1"/><path d="M1256.7,9.8 L1264.6,17.7 M1264.6,9.8 L1256.7,17.7" stroke="#e8f0ea" stroke-width="1.1"/><path d="M1133,38.5 H1129.5 V44.7 H1138.5 V42.5" fill="none" stroke="#2a6a47" stroke-width="1"/><path d="M1131.5,43 C1132,39.5 1135,38.5 1138,38.5 M1136.3,36.5 L1138.5,38.5 L1136.3,40.5" fill="none" stroke="#2a6a47" stroke-width="1"/><path d="M1193.7,36.3 H1202.4 V42.5 H1197 L1195,44.7 V42.5 H1193.7 Z" fill="none" stroke="#2a6a47" stroke-width="1"/><circle cx="700.4" cy="39.5" r="3.7" fill="none" stroke="#555" stroke-width="1.1"/><line x1="697.7" y1="42.3" x2="692.6" y2="47" stroke="#555" stroke-width="1.2"/></svg>
<svg style="position:absolute;left:0;top:130px" width="1280" height="40" viewBox="0 130 1280 40"><polygon points="77.5,148.5 82.5,148.5 80,151.5" fill="#666"/><circle cx="101" cy="146.5" r="0.9" fill="#aaa"/><circle cx="101" cy="150.5" r="0.9" fill="#aaa"/><circle cx="101" cy="154.5" r="0.9" fill="#aaa"/><path d="M124,146 L132.5,154.5 M132.5,146 L124,154.5" stroke="#b0b0b0" stroke-width="1.1"/><polyline points="153.5,151 156.8,154.5 163.5,146.2" fill="none" stroke="#b0b0b0" stroke-width="1.2"/><text x="183.5" y="155" font-family="Liberation Serif" font-style="italic" font-size="12.5" fill="#555">f</text><text x="188" y="155.5" font-family="Liberation Serif" font-style="italic" font-size="9" fill="#555">x</text><polyline points="1265.5,148.5 1269,151.5 1272.5,148.5" fill="none" stroke="#555" stroke-width="1.1"/></svg>
<svg style="position:absolute;left:0;top:680px" width="1280" height="40" viewBox="0 680 1280 40"><g fill="#fff"><polygon points="13.3,697.6 19.6,696.8 19.6,703 13.3,703"/><polygon points="20.5,696.6 26.9,695.8 26.9,703 20.5,703"/><polygon points="13.3,704 19.6,704 19.6,710.3 13.3,709.5"/><polygon points="20.5,704 26.9,704 26.9,711 20.5,710.3"/></g><circle cx="56.6" cy="703.2" r="7.3" fill="none" stroke="#111" stroke-width="2.2"/><rect x="307" y="697.2" width="5.2" height="8.6" rx="2.6" fill="#444"/><path d="M305.3,703.5 A4.4,4.4 0 0 0 314,703.5 M309.6,708 V710" fill="none" stroke="#444" stroke-width="1.1"/><g fill="none" stroke="#fff" stroke-width="1"><rect x="340.5" y="699.5" width="8" height="8"/><line x1="340" y1="697" x2="349" y2="697"/><line x1="340" y1="709.5" x2="349" y2="709.5"/><line x1="353" y1="696.5" x2="353" y2="709.5"/></g><rect x="385.5" y="697.5" width="12.5" height="10" fill="#fff"/><polyline points="385.5,697.8 391.7,702.5 398,697.8" fill="none" stroke="#0a64c8" stroke-width="1"/><polygon points="379.4,696.5 389,694.6 389,711.8 379.4,709.8" fill="#0a64c8"/><ellipse cx="384" cy="703.2" rx="2.6" ry="3.4" fill="none" stroke="#fff" stroke-width="1.5"/><circle cx="430.3" cy="703.1" r="9" fill="#db4437"/><path d="M430.3,703.1 L438.1,698.6 A9,9 0 0 1 425.8,710.9 Z" fill="#f4c20d"/><path d="M430.3,703.1 L425.8,710.9 A9,9 0 0 1 422.5,698.6 Z" fill="#0f9d58"/><circle cx="430.3" cy="703.1" r="4.2" fill="#fff"/><circle cx="430.3" cy="703.1" r="3.2" fill="#4285f4"/><path d="M462.5,697 H469 L470.5,698.6 H481 V711 H462.5 Z" fill="#f3d37e"/><rect x="462.5" y="700" width="18.5" height="11" fill="#f8dd8a"/><rect x="467" y="705" width="10" height="6" fill="#3a8fd8"/><rect x="469.5" y="707" width="5" height="4" fill="#f8dd8a"/><ellipse cx="513.2" cy="703.4" rx="9.6" ry="8.6" fill="none" stroke="#fff" stroke-width="1.8"/><path d="M504.5,708 L510.5,700.5 L514.5,705 L517,702.5 L522,708 A9.6,8.6 0 0 1 504.5,708 Z" fill="#fff"/><circle cx="509.5" cy="699.5" r="1.5" fill="#fff"/><path d="M506,695.3 A10,9 0 0 1 520,697" fill="none" stroke="#1d2a36" stroke-width="1.3"/><polygon points="554.5,694.9 563.9,703 554.5,711.2 545,703" fill="#4a8ac4" stroke="#bcd3e6" stroke-width="1.2"/><circle cx="554.5" cy="703" r="2.8" fill="none" stroke="#9fc4e6" stroke-width="0.9"/><path d="M602.5,704.5 H592 C592.5,709 598,711 603,708.5 V711 C596,714 588,711 588,703.5 C588,697 592.5,695 596,695 C601,695 603.5,699 602.5,704.5 Z M592.3,701.5 H598.5 C598.5,699.2 596.5,698.3 595.3,698.3 C593.6,698.3 592.5,699.6 592.3,701.5 Z" fill="#0b78e3" fill-rule="evenodd"/><circle cx="636.9" cy="703.5" r="9.8" fill="#f3e6e2"/><path d="M640.5,707.5 C639.5,708.3 638,708.7 636.8,708.7 C633.8,708.7 631.8,706.3 631.8,703.5 C631.8,700.7 634,698.4 636.8,698.4 C639.6,698.4 641.7,700.7 641.7,703.5 V708.5" fill="none" stroke="#e5602e" stroke-width="1.4"/><rect x="676" y="696.5" width="11.5" height="13.5" fill="#fff" stroke="#1e7145" stroke-width="0"/><rect x="678" y="698" width="2" height="10.5" fill="#6fb08a"/><rect x="682" y="698" width="4" height="10.5" fill="#2b8a57"/><rect x="669.6" y="695.7" width="10" height="14.6" fill="#1e7145"/><text x="671" y="707" font-family="Liberation Sans" font-size="9" font-weight="700" fill="#fff">x</text></svg>
<svg style="position:absolute;left:853px;top:400px" width="427" height="320" viewBox="853 400 427 320"><defs><linearGradient id="wall" x1="0" y1="0" x2="1" y2="0.3"><stop offset="0" stop-color="#e2d9e6"/><stop offset="0.45" stop-color="#dad6e0"/><stop offset="1" stop-color="#d3d2d9"/></linearGradient><radialGradient id="skin" cx="0.5" cy="0.45" r="0.6"><stop offset="0" stop-color="#dfbcb0"/><stop offset="0.7" stop-color="#cfa99c"/><stop offset="1" stop-color="#ad887c"/></radialGradient><linearGradient id="hairg" x1="0" y1="0" x2="0" y2="1"><stop offset="0" stop-color="#3d3432"/><stop offset="0.35" stop-color="#2f2a2a"/><stop offset="1" stop-color="#282425"/></linearGradient><filter id="bl" x="-20%" y="-20%" width="140%" height="140%"><feGaussianBlur stdDeviation="1.2"/></filter><filter id="bl2" x="-20%" y="-20%" width="140%" height="140%"><feGaussianBlur stdDeviation="2.5"/></filter></defs><rect x="853" y="400" width="427" height="320" fill="url(#wall)"/><polygon points="1212,400 1280,400 1280,411" fill="#dfdfe3"/><line x1="1212" y1="400.5" x2="1280" y2="411.5" stroke="#8a8894" stroke-width="2" filter="url(#bl)"/><line x1="1270" y1="409" x2="1281" y2="478" stroke="#3a3846" stroke-width="4" filter="url(#bl)"/><polygon points="1273.5,410.5 1280,411.5 1280,455" fill="#dcdbe1" filter="url(#bl)"/><polygon points="853,400 862.5,400 853,463" fill="#44424f" filter="url(#bl)"/><polygon points="853,693 1280,689.5 1280,701 853,706.5" fill="#3d3537" filter="url(#bl)"/><polygon points="853,706.5 1280,701 1280,720 853,720" fill="#dedae3"/><path d="M915,720 C922,700 938,682 958,674 C972,669 985,667 998,668 L1008,720 Z" fill="#2a292f" filter="url(#bl)"/><path d="M1135,662 C1152,655 1180,653 1203,662 C1222,672 1238,694 1250,720 L1135,720 Z" fill="#2a292f" filter="url(#bl)"/><path d="M1063,495.5 C1075,495 1092,503 1104,512 C1118,524 1128,545 1132,570 C1137,600 1138,630 1144,655 C1150,680 1158,700 1163,720 L977,720 C978,690 982,660 985,630 C988,600 990,575 997,553 C1002,535 1010,520 1022,508 C1035,500 1050,496 1063,495.5 Z" fill="url(#hairg)" filter="url(#bl2)"/><path d="M1031,519 C1042,517 1052,517 1058,518 C1070,528 1082,538 1090,543 L1103,556 C1107,575 1108,600 1105,620 C1101,638 1094,648 1089,654 C1089,675 1090,695 1092,708 C1078,714 1058,714 1047,708 C1047,690 1046,670 1044,654 C1031,644 1022,627 1020,607 C1018,587 1019,565 1024,548 C1026,535 1028,525 1031,519 Z" fill="url(#skin)" filter="url(#bl)"/><path d="M1044,650 C1055,658 1077,659 1089,652 L1092,708 C1075,712 1058,712 1047,708 Z" fill="#9c7568" opacity="0.7" filter="url(#bl2)"/><ellipse cx="1064" cy="590" rx="34" ry="30" fill="#e6c6ba" opacity="0.35" filter="url(#bl2)"/><path d="M1043,705 C1060,713 1078,713 1095,705 L1100,720 L1040,720 Z" fill="#1f1e24" filter="url(#bl)"/><path d="M1057,517 C1070,515 1090,520 1102,532 L1104,560 C1098,552 1093,546 1088,543 C1078,535 1066,525 1057,517 Z" fill="#3a3230" filter="url(#bl)"/><path d="M1026,545 C1020,570 1018,600 1021,625 C1025,650 1037,680 1046,720 L995,720 C990,690 990,650 995,610 C1000,580 1010,555 1026,545 Z" fill="#2b2627" filter="url(#bl)"/><path d="M1104,550 C1110,580 1110,615 1103,640 C1096,665 1090,695 1091,720 L1160,720 C1152,695 1144,665 1139,630 C1134,595 1126,565 1104,550 Z" fill="#2b2627" filter="url(#bl)"/><path d="M1028,545 C1036,541 1046,541 1053,544" fill="none" stroke="#7a5a50" stroke-width="2" opacity="0.7" filter="url(#bl)"/><g fill="none" stroke="#3f3431" stroke-width="2.6" stroke-linejoin="round" filter="url(#bl)"><path d="M1015.3,555.7 L1059.7,550.8 C1061,560 1060,568 1058.3,575.8 L1024.3,579.3 C1020,572 1017,563 1015.3,555.7 Z"/><path d="M1070.8,549.4 L1100,547.4 C1104,556 1107,566 1107.6,574.4 L1077.8,576.5 C1074,568 1072,558 1070.8,549.4 Z"/><path d="M1059.7,551 C1063,549 1067,549 1070.8,550"/></g><ellipse cx="1043" cy="565.5" rx="8" ry="3" fill="#56645e" opacity="0.75" filter="url(#bl)"/><ellipse cx="1089" cy="565.5" rx="7.5" ry="3" fill="#4a4442" opacity="0.75" filter="url(#bl)"/><path d="M1062,579 C1060,586 1061,590 1067,590 C1073,590 1074,586 1072,579" fill="none" stroke="#a47d70" stroke-width="1.4" filter="url(#bl)"/><circle cx="1060" cy="586.5" r="1.6" fill="#7a4a44" filter="url(#bl)"/><circle cx="1075" cy="586.5" r="1.6" fill="#7a4a44" filter="url(#bl)"/><path d="M1047,612 C1055,604 1078,603 1087,611 C1080,622 1057,623 1047,612 Z" fill="#b88078" filter="url(#bl)"/><path d="M1051,612.5 C1060,610 1075,610 1083,612 C1076,616.5 1059,617 1051,612.5 Z" fill="#6e4a44" filter="url(#bl)"/><path d="M1056,613.2 C1064,612 1072,612 1078,613" fill="none" stroke="#c9b0a8" stroke-width="1.2" filter="url(#bl)"/></svg>
<svg style="position:absolute;left:533px;top:10px" width="8" height="6"><polygon points="0.5,1.5 6.5,1.5 3.5,4.5" fill="#fff"/></svg>
<svg style="position:absolute;left:77px;top:124px" width="12" height="16" viewBox="0 0 12 16"><path d="M1.3,1.6 L1.3,13 L4,10.6 L6,14.8 L7.8,14 L5.9,9.9 L9.5,9.9 Z" fill="#fff" stroke="#222" stroke-width="1"/></svg>
</body></html>
